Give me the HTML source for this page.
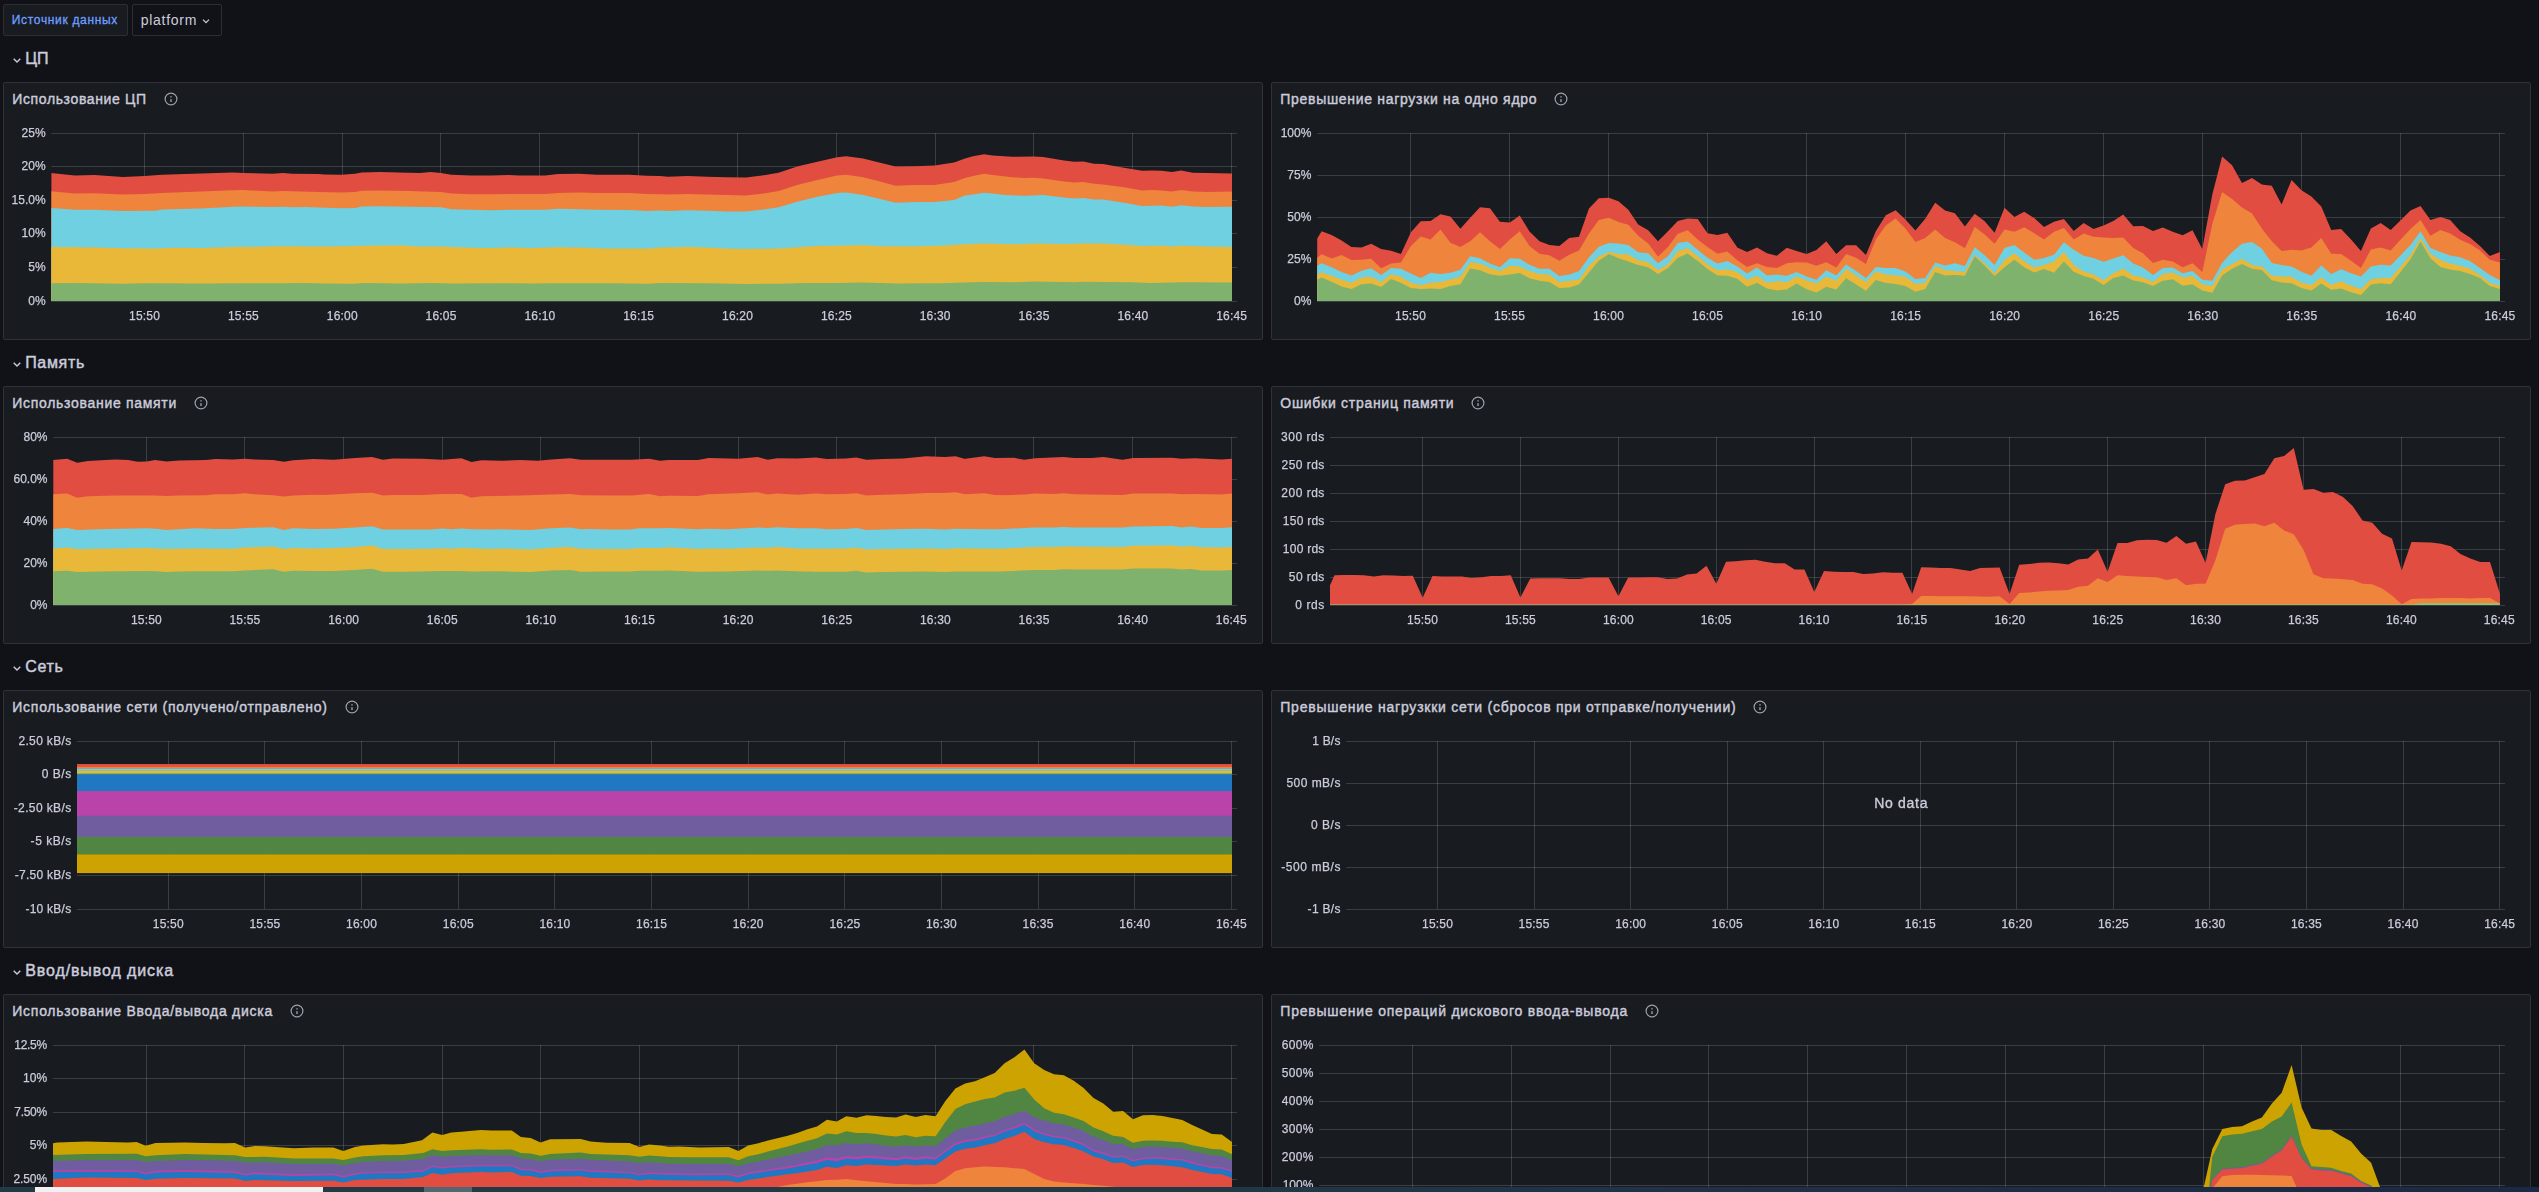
<!DOCTYPE html>
<html><head><meta charset="utf-8"><title>Dashboard</title>
<style>
html,body{margin:0;padding:0;background:#111217;width:2539px;height:1192px;overflow:hidden;}
body{width:2539px;height:1192px;overflow:hidden;position:relative;font-family:"Liberation Sans",sans-serif;color:rgb(204,204,220);}
.panel{position:absolute;width:1258px;height:256px;background:#181b1f;border:1px solid #303238;border-radius:2px;}
.pt{position:absolute;left:8.3px;top:7px;height:18px;line-height:18px;font-size:14px;white-space:nowrap;color:rgb(204,204,220);-webkit-text-stroke:0.4px rgb(204,204,220);}
.row{position:absolute;left:25.2px;height:30px;line-height:30px;font-size:16px;white-space:nowrap;color:rgb(204,204,220);-webkit-text-stroke:0.45px rgb(204,204,220);}
.chev{position:absolute;}
.var{position:absolute;top:4px;height:30px;border:1px solid #2c2e33;border-radius:2px;box-sizing:content-box;}
svg text{font-family:"Liberation Sans",sans-serif;}
#root{position:absolute;left:0;top:0;width:2539px;height:1192px;overflow:hidden;}
</style></head><body><div id="root">

<div class="var" style="left:3px;width:123px;background:#181b1f;"><span id="vl" style="letter-spacing:0.672px;position:absolute;left:7.8px;top:0;line-height:30px;font-size:12px;color:#6e9fff;white-space:nowrap;-webkit-text-stroke:0.3px #6e9fff;">Источник данных</span></div>
<div class="var" style="left:132px;width:88px;background:#111217;"><span id="vv" style="letter-spacing:0.703px;position:absolute;left:7.8px;top:0;line-height:30px;font-size:14px;color:rgb(204,204,220);white-space:nowrap;">platform</span><svg style="position:absolute;left:68px;top:12.5px" width="10" height="7" viewBox="0 0 10 7"><path d="M2.0,1.6 L5,4.6 L8.0,1.6" fill="none" stroke="rgb(204,204,220)" stroke-width="1.3"/></svg></div>
<svg class="chev" style="left:12px;top:56.6px" width="10" height="8" viewBox="0 0 10 8"><path d="M1.7,1.7 L5,5.0 L8.3,1.7" fill="none" stroke="rgb(204,204,220)" stroke-width="1.4"/></svg>
<div class="row" id="r0" style="letter-spacing:-0.072px;top:43.8px">ЦП</div>
<svg class="chev" style="left:12px;top:360.6px" width="10" height="8" viewBox="0 0 10 8"><path d="M1.7,1.7 L5,5.0 L8.3,1.7" fill="none" stroke="rgb(204,204,220)" stroke-width="1.4"/></svg>
<div class="row" id="r1" style="letter-spacing:0.678px;top:347.8px">Память</div>
<svg class="chev" style="left:12px;top:664.6px" width="10" height="8" viewBox="0 0 10 8"><path d="M1.7,1.7 L5,5.0 L8.3,1.7" fill="none" stroke="rgb(204,204,220)" stroke-width="1.4"/></svg>
<div class="row" id="r2" style="letter-spacing:0.727px;top:651.8px">Сеть</div>
<svg class="chev" style="left:12px;top:968.6px" width="10" height="8" viewBox="0 0 10 8"><path d="M1.7,1.7 L5,5.0 L8.3,1.7" fill="none" stroke="rgb(204,204,220)" stroke-width="1.4"/></svg>
<div class="row" id="r3" style="letter-spacing:0.894px;top:955.8px">Ввод/вывод диска</div>
<div class="panel" style="left:3px;top:82px"><div class="pt" id="t0" style="letter-spacing:0.621px;">Использование ЦП</div><svg style="position:absolute;left:158.6px;top:7.8px" width="16" height="16" viewBox="0 0 16 16"><circle cx="8" cy="8" r="5.9" fill="none" stroke="rgba(204,204,220,0.75)" stroke-width="1.2"/><rect x="7.3" y="8.2" width="1.4" height="2.8" fill="rgba(204,204,220,0.75)"/><rect x="7.3" y="5.2" width="1.4" height="1.3" fill="rgba(204,204,220,0.75)"/></svg></div>
<div class="panel" style="left:1271px;top:82px"><div class="pt" id="t1" style="letter-spacing:0.695px;">Превышение нагрузки на одно ядро</div><svg style="position:absolute;left:281.2px;top:7.8px" width="16" height="16" viewBox="0 0 16 16"><circle cx="8" cy="8" r="5.9" fill="none" stroke="rgba(204,204,220,0.75)" stroke-width="1.2"/><rect x="7.3" y="8.2" width="1.4" height="2.8" fill="rgba(204,204,220,0.75)"/><rect x="7.3" y="5.2" width="1.4" height="1.3" fill="rgba(204,204,220,0.75)"/></svg></div>
<div class="panel" style="left:3px;top:386px"><div class="pt" id="t2" style="letter-spacing:0.698px;">Использование памяти</div><svg style="position:absolute;left:189.0px;top:7.8px" width="16" height="16" viewBox="0 0 16 16"><circle cx="8" cy="8" r="5.9" fill="none" stroke="rgba(204,204,220,0.75)" stroke-width="1.2"/><rect x="7.3" y="8.2" width="1.4" height="2.8" fill="rgba(204,204,220,0.75)"/><rect x="7.3" y="5.2" width="1.4" height="1.3" fill="rgba(204,204,220,0.75)"/></svg></div>
<div class="panel" style="left:1271px;top:386px"><div class="pt" id="t3" style="letter-spacing:0.712px;">Ошибки страниц памяти</div><svg style="position:absolute;left:198.3px;top:7.8px" width="16" height="16" viewBox="0 0 16 16"><circle cx="8" cy="8" r="5.9" fill="none" stroke="rgba(204,204,220,0.75)" stroke-width="1.2"/><rect x="7.3" y="8.2" width="1.4" height="2.8" fill="rgba(204,204,220,0.75)"/><rect x="7.3" y="5.2" width="1.4" height="1.3" fill="rgba(204,204,220,0.75)"/></svg></div>
<div class="panel" style="left:3px;top:690px"><div class="pt" id="t4" style="letter-spacing:0.731px;">Использование сети (получено/отправлено)</div><svg style="position:absolute;left:339.6px;top:7.8px" width="16" height="16" viewBox="0 0 16 16"><circle cx="8" cy="8" r="5.9" fill="none" stroke="rgba(204,204,220,0.75)" stroke-width="1.2"/><rect x="7.3" y="8.2" width="1.4" height="2.8" fill="rgba(204,204,220,0.75)"/><rect x="7.3" y="5.2" width="1.4" height="1.3" fill="rgba(204,204,220,0.75)"/></svg></div>
<div class="panel" style="left:1271px;top:690px"><div class="pt" id="t5" style="letter-spacing:0.763px;">Превышение нагрузкки сети (сбросов при отправке/получении)</div><svg style="position:absolute;left:480.4px;top:7.8px" width="16" height="16" viewBox="0 0 16 16"><circle cx="8" cy="8" r="5.9" fill="none" stroke="rgba(204,204,220,0.75)" stroke-width="1.2"/><rect x="7.3" y="8.2" width="1.4" height="2.8" fill="rgba(204,204,220,0.75)"/><rect x="7.3" y="5.2" width="1.4" height="1.3" fill="rgba(204,204,220,0.75)"/></svg></div>
<div class="panel" style="left:3px;top:994px"><div class="pt" id="t6" style="letter-spacing:0.735px;">Использование Ввода/вывода диска</div><svg style="position:absolute;left:285.0px;top:7.8px" width="16" height="16" viewBox="0 0 16 16"><circle cx="8" cy="8" r="5.9" fill="none" stroke="rgba(204,204,220,0.75)" stroke-width="1.2"/><rect x="7.3" y="8.2" width="1.4" height="2.8" fill="rgba(204,204,220,0.75)"/><rect x="7.3" y="5.2" width="1.4" height="1.3" fill="rgba(204,204,220,0.75)"/></svg></div>
<div class="panel" style="left:1271px;top:994px"><div class="pt" id="t7" style="letter-spacing:0.772px;">Превышение операций дискового ввода-вывода</div><svg style="position:absolute;left:372.0px;top:7.8px" width="16" height="16" viewBox="0 0 16 16"><circle cx="8" cy="8" r="5.9" fill="none" stroke="rgba(204,204,220,0.75)" stroke-width="1.2"/><rect x="7.3" y="8.2" width="1.4" height="2.8" fill="rgba(204,204,220,0.75)"/><rect x="7.3" y="5.2" width="1.4" height="1.3" fill="rgba(204,204,220,0.75)"/></svg></div>
<svg style="position:absolute;left:0;top:0;pointer-events:none;will-change:transform" width="2539" height="1192" viewBox="0 0 2539 1192">
<g stroke="rgba(240,250,255,0.155)" stroke-width="1"><line x1="51.4" x2="1237.0" y1="133.5" y2="133.5"/><line x1="51.4" x2="1237.0" y1="166.5" y2="166.5"/><line x1="51.4" x2="1237.0" y1="200.5" y2="200.5"/><line x1="51.4" x2="1237.0" y1="233.5" y2="233.5"/><line x1="51.4" x2="1237.0" y1="267.5" y2="267.5"/><line x1="51.4" x2="1237.0" y1="301.5" y2="301.5"/><line x1="144.5" x2="144.5" y1="133.0" y2="301.0"/><line x1="243.5" x2="243.5" y1="133.0" y2="301.0"/><line x1="342.5" x2="342.5" y1="133.0" y2="301.0"/><line x1="440.5" x2="440.5" y1="133.0" y2="301.0"/><line x1="539.5" x2="539.5" y1="133.0" y2="301.0"/><line x1="638.5" x2="638.5" y1="133.0" y2="301.0"/><line x1="737.5" x2="737.5" y1="133.0" y2="301.0"/><line x1="836.5" x2="836.5" y1="133.0" y2="301.0"/><line x1="935.5" x2="935.5" y1="133.0" y2="301.0"/><line x1="1033.5" x2="1033.5" y1="133.0" y2="301.0"/><line x1="1132.5" x2="1132.5" y1="133.0" y2="301.0"/><line x1="1231.5" x2="1231.5" y1="133.0" y2="301.0"/></g><clipPath id="clip3_82"><rect x="51.4" y="122" width="1185.6" height="180.0"/></clipPath><g clip-path="url(#clip3_82)"><path d="M51.0,173.0 L74.9,175.4 L94.4,175.1 L123.0,176.9 L144.5,176.0 L162.0,174.7 L201.0,173.4 L233.6,172.5 L243.3,173.0 L272.6,173.7 L283.0,173.1 L292.1,173.8 L318.1,174.1 L324.6,174.4 L341.7,174.7 L355.0,173.7 L361.7,172.4 L379.9,172.1 L408.5,172.8 L420.2,173.1 L430.6,172.1 L441.0,173.1 L451.4,174.7 L470.9,175.4 L490.4,175.4 L508.6,175.0 L519.1,175.6 L545.1,175.6 L558.1,174.1 L578.9,173.8 L597.1,174.7 L629.6,174.7 L646.5,175.7 L660.0,176.0 L668.0,176.7 L687.5,176.0 L707.0,176.7 L726.5,177.3 L746.0,177.6 L765.5,175.0 L778.5,172.8 L798.0,166.3 L817.5,161.7 L837.1,157.2 L846.2,156.2 L863.1,158.5 L876.1,161.7 L895.6,166.5 L915.1,166.3 L934.6,165.6 L954.1,162.4 L965.0,158.5 L973.0,156.2 L984.1,154.3 L992.5,155.5 L1012.0,156.8 L1033.5,156.5 L1043.2,156.9 L1064.0,160.4 L1074.4,161.7 L1083.5,161.4 L1093.9,163.7 L1103.0,164.0 L1122.5,167.6 L1142.1,170.8 L1152.5,170.4 L1161.6,170.8 L1172.0,172.1 L1181.1,170.4 L1192.8,172.8 L1207.1,173.1 L1232.0,173.4 L1232.0,301.0 L51.0,301.0Z" fill="#E24D42" /><path d="M51.0,191.2 L74.9,193.6 L94.4,193.3 L123.0,194.5 L144.5,194.0 L162.0,192.9 L201.0,191.6 L233.6,190.3 L243.3,190.1 L272.6,191.4 L283.0,191.0 L318.1,191.9 L341.7,192.4 L355.0,191.9 L361.7,190.7 L379.9,190.6 L408.5,191.1 L441.0,191.9 L451.4,193.6 L470.9,194.2 L490.4,194.3 L508.6,194.0 L545.1,194.0 L558.1,192.9 L578.9,192.4 L597.1,192.9 L629.6,192.9 L646.5,194.0 L660.0,194.2 L668.0,194.5 L687.5,194.0 L707.0,194.6 L726.5,195.1 L746.0,195.5 L765.5,193.2 L778.5,191.0 L798.0,184.7 L817.5,179.9 L837.1,175.4 L846.2,174.7 L863.1,177.3 L876.1,180.6 L895.6,185.8 L915.1,185.1 L934.6,184.9 L954.1,181.9 L965.0,178.0 L973.0,176.0 L984.1,173.8 L992.5,175.1 L1012.0,177.3 L1025.0,178.0 L1033.5,177.7 L1043.2,178.6 L1064.0,181.6 L1074.4,182.5 L1083.5,182.0 L1093.9,183.8 L1103.0,184.5 L1122.5,187.1 L1142.1,190.6 L1152.5,190.1 L1161.6,190.6 L1172.0,191.4 L1181.1,190.1 L1192.8,191.4 L1207.1,191.9 L1232.0,191.6 L1232.0,301.0 L51.0,301.0Z" fill="#EF843C" /><path d="M51.0,208.1 L74.9,209.8 L94.4,209.8 L123.0,211.1 L155.5,210.7 L162.0,209.6 L201.0,208.5 L233.6,206.8 L243.3,206.6 L272.6,207.0 L283.0,206.7 L292.1,207.2 L305.1,207.0 L341.7,208.3 L355.0,207.9 L361.7,206.6 L379.9,206.2 L408.5,206.7 L441.0,207.2 L451.4,209.2 L470.9,209.8 L490.4,210.3 L508.6,209.8 L545.1,209.8 L558.1,208.8 L578.9,209.2 L597.1,209.8 L629.6,210.1 L646.5,210.9 L660.0,210.5 L668.0,210.9 L687.5,210.2 L707.0,210.7 L726.5,211.4 L746.0,211.6 L765.5,209.2 L778.5,207.2 L798.0,201.4 L817.5,196.8 L837.1,192.9 L846.2,192.4 L863.1,194.9 L876.1,198.1 L895.6,202.7 L915.1,202.0 L934.6,202.0 L954.1,200.1 L965.0,195.5 L973.0,194.6 L984.1,192.7 L992.5,193.6 L1004.2,195.1 L1025.0,195.8 L1043.2,194.9 L1064.0,197.5 L1074.4,198.4 L1083.5,197.9 L1093.9,199.4 L1103.0,199.4 L1122.5,202.4 L1142.1,205.9 L1161.6,205.5 L1172.0,206.8 L1181.1,205.3 L1192.8,206.6 L1207.1,207.0 L1232.0,206.8 L1232.0,301.0 L51.0,301.0Z" fill="#6ED0E0" /><path d="M51.0,246.9 L74.9,247.3 L94.4,247.5 L123.0,248.2 L155.5,248.4 L175.0,247.8 L201.0,247.9 L233.6,247.1 L283.0,246.2 L324.6,246.5 L355.0,246.0 L379.9,245.4 L402.0,245.6 L420.2,246.4 L441.0,246.6 L470.9,247.8 L490.4,247.9 L508.6,247.5 L532.1,247.9 L558.1,247.3 L588.0,247.8 L603.6,248.4 L629.6,248.4 L649.1,248.4 L660.0,247.5 L687.5,247.1 L707.0,247.5 L726.5,248.6 L746.0,249.1 L778.5,248.6 L798.0,247.3 L817.5,246.0 L837.1,245.8 L863.1,245.3 L882.6,246.2 L915.1,246.2 L941.1,245.8 L965.0,244.3 L984.1,243.4 L1014.6,244.3 L1033.5,243.4 L1064.0,244.0 L1083.5,243.6 L1103.0,243.4 L1129.1,244.9 L1142.1,246.0 L1161.6,245.8 L1172.0,246.5 L1181.1,245.8 L1207.1,246.6 L1232.0,246.9 L1232.0,301.0 L51.0,301.0Z" fill="#EAB839" /><path d="M51.0,283.3 L74.9,283.0 L123.0,283.7 L144.5,283.3 L201.0,283.4 L243.3,283.3 L283.0,283.3 L305.1,283.0 L324.6,283.4 L355.0,283.7 L363.0,283.0 L402.0,283.4 L430.6,283.0 L451.4,283.4 L508.6,283.3 L532.1,283.4 L558.1,283.3 L610.1,283.3 L649.1,283.7 L660.0,283.0 L707.0,283.3 L746.0,283.9 L778.5,283.7 L804.5,282.9 L837.1,282.9 L863.1,282.6 L895.6,283.6 L941.1,283.3 L965.0,282.4 L984.1,282.1 L1014.6,282.2 L1033.5,281.6 L1064.0,282.0 L1074.4,282.2 L1083.5,281.7 L1129.1,282.2 L1152.5,282.9 L1181.1,282.2 L1232.0,282.4 L1232.0,301.0 L51.0,301.0Z" fill="#7EB26D" /></g><g fill="rgb(204,204,220)" stroke="rgb(204,204,220)" stroke-width="0.25" font-size="12px" class="tk"><text x="45.6" y="136.8" text-anchor="end">25%</text><text x="45.6" y="169.8" text-anchor="end">20%</text><text x="45.6" y="203.8" text-anchor="end">15.0%</text><text x="45.6" y="236.8" text-anchor="end">10%</text><text x="45.6" y="270.8" text-anchor="end">5%</text><text x="45.6" y="304.8" text-anchor="end">0%</text><text x="144.5" y="320.0" text-anchor="middle" textLength="30.8" lengthAdjust="spacing">15:50</text><text x="243.3" y="320.0" text-anchor="middle" textLength="30.8" lengthAdjust="spacing">15:55</text><text x="342.2" y="320.0" text-anchor="middle" textLength="30.8" lengthAdjust="spacing">16:00</text><text x="441.0" y="320.0" text-anchor="middle" textLength="30.8" lengthAdjust="spacing">16:05</text><text x="539.8" y="320.0" text-anchor="middle" textLength="30.8" lengthAdjust="spacing">16:10</text><text x="638.6" y="320.0" text-anchor="middle" textLength="30.8" lengthAdjust="spacing">16:15</text><text x="737.5" y="320.0" text-anchor="middle" textLength="30.8" lengthAdjust="spacing">16:20</text><text x="836.3" y="320.0" text-anchor="middle" textLength="30.8" lengthAdjust="spacing">16:25</text><text x="935.1" y="320.0" text-anchor="middle" textLength="30.8" lengthAdjust="spacing">16:30</text><text x="1034.0" y="320.0" text-anchor="middle" textLength="30.8" lengthAdjust="spacing">16:35</text><text x="1132.8" y="320.0" text-anchor="middle" textLength="30.8" lengthAdjust="spacing">16:40</text><text x="1231.6" y="320.0" text-anchor="middle" textLength="30.8" lengthAdjust="spacing">16:45</text></g>
<g stroke="rgba(240,250,255,0.155)" stroke-width="1"><line x1="1317.2" x2="2505.0" y1="133.5" y2="133.5"/><line x1="1317.2" x2="2505.0" y1="175.5" y2="175.5"/><line x1="1317.2" x2="2505.0" y1="217.5" y2="217.5"/><line x1="1317.2" x2="2505.0" y1="259.5" y2="259.5"/><line x1="1317.2" x2="2505.0" y1="301.5" y2="301.5"/><line x1="1410.5" x2="1410.5" y1="133.0" y2="301.0"/><line x1="1509.5" x2="1509.5" y1="133.0" y2="301.0"/><line x1="1608.5" x2="1608.5" y1="133.0" y2="301.0"/><line x1="1707.5" x2="1707.5" y1="133.0" y2="301.0"/><line x1="1806.5" x2="1806.5" y1="133.0" y2="301.0"/><line x1="1905.5" x2="1905.5" y1="133.0" y2="301.0"/><line x1="2004.5" x2="2004.5" y1="133.0" y2="301.0"/><line x1="2103.5" x2="2103.5" y1="133.0" y2="301.0"/><line x1="2202.5" x2="2202.5" y1="133.0" y2="301.0"/><line x1="2301.5" x2="2301.5" y1="133.0" y2="301.0"/><line x1="2400.5" x2="2400.5" y1="133.0" y2="301.0"/><line x1="2499.5" x2="2499.5" y1="133.0" y2="301.0"/></g><clipPath id="clip1271_82"><rect x="1317.2" y="122" width="1187.8" height="180.0"/></clipPath><g clip-path="url(#clip1271_82)"><path d="M1317.0,238.7 L1321.7,231.3 L1331.6,235.0 L1341.6,240.4 L1351.4,247.0 L1361.4,247.5 L1371.2,243.7 L1381.1,248.9 L1391.1,250.7 L1400.9,254.1 L1410.9,232.3 L1420.7,221.3 L1430.6,221.0 L1440.5,214.3 L1450.4,216.6 L1460.4,228.7 L1470.2,217.7 L1480.0,207.2 L1490.0,208.3 L1499.9,221.8 L1509.9,222.5 L1519.7,215.5 L1529.5,231.6 L1539.5,241.2 L1549.4,245.0 L1559.3,246.0 L1569.2,237.9 L1579.0,236.8 L1589.0,208.6 L1598.8,198.3 L1608.8,197.8 L1618.5,201.2 L1628.3,209.7 L1638.2,224.4 L1648.2,230.3 L1658.0,241.2 L1668.0,231.3 L1677.8,221.0 L1687.7,218.4 L1697.7,219.1 L1707.5,233.2 L1717.5,235.0 L1727.3,232.8 L1737.3,247.5 L1747.1,251.9 L1757.0,247.5 L1767.0,253.3 L1776.8,255.8 L1786.8,247.8 L1796.6,251.1 L1806.6,254.1 L1816.4,250.0 L1826.3,241.2 L1836.3,254.1 L1846.1,245.3 L1856.1,245.3 L1865.9,255.1 L1875.8,231.3 L1885.8,215.2 L1895.6,210.3 L1905.4,219.6 L1915.4,230.6 L1925.2,218.8 L1935.2,202.7 L1945.1,210.5 L1954.9,213.3 L1964.9,226.5 L1974.7,213.7 L1984.7,221.3 L1994.6,232.8 L2004.5,207.8 L2014.4,216.9 L2024.2,211.8 L2034.2,218.1 L2044.0,226.9 L2054.0,221.8 L2063.9,219.1 L2073.7,230.9 L2083.7,223.0 L2093.5,229.1 L2103.5,225.4 L2113.3,221.0 L2123.2,214.4 L2133.2,226.2 L2143.0,225.9 L2153.0,230.9 L2162.8,227.4 L2172.7,231.8 L2182.7,235.3 L2192.5,230.3 L2202.3,248.9 L2212.3,194.6 L2222.1,156.4 L2232.1,165.2 L2242.0,182.9 L2252.0,178.0 L2261.8,184.6 L2271.8,185.8 L2281.6,204.4 L2291.6,179.9 L2301.4,190.2 L2311.4,196.4 L2321.3,206.4 L2331.2,229.9 L2341.1,229.1 L2351.1,239.4 L2360.9,251.1 L2370.9,228.4 L2380.7,223.0 L2390.7,229.9 L2400.7,220.3 L2410.5,210.5 L2420.5,206.1 L2430.4,220.0 L2440.4,217.1 L2450.2,220.0 L2460.2,231.3 L2470.0,237.6 L2480.0,246.0 L2489.8,256.0 L2500.0,251.9 L2500.0,301.0 L1317.0,301.0Z" fill="#E24D42" /><path d="M1317.0,257.8 L1321.7,254.2 L1331.6,258.5 L1341.6,255.1 L1351.4,260.1 L1361.4,259.7 L1371.2,258.8 L1381.1,268.2 L1391.1,263.6 L1400.9,262.6 L1410.9,246.0 L1420.7,236.6 L1430.6,239.4 L1440.5,229.6 L1450.4,242.8 L1460.4,246.9 L1470.2,241.2 L1480.0,232.3 L1490.0,241.2 L1499.9,248.9 L1509.9,239.4 L1519.7,231.3 L1529.5,246.0 L1539.5,253.8 L1549.4,255.3 L1559.3,260.7 L1569.2,254.8 L1579.0,250.4 L1589.0,233.5 L1598.8,219.9 L1608.8,217.8 L1618.5,222.1 L1628.3,224.7 L1638.2,235.7 L1648.2,243.5 L1658.0,256.6 L1668.0,247.0 L1677.8,233.8 L1687.7,230.3 L1697.7,239.4 L1707.5,247.0 L1717.5,253.8 L1727.3,251.6 L1737.3,260.2 L1747.1,267.0 L1757.0,263.2 L1767.0,267.0 L1776.8,268.0 L1786.8,263.2 L1796.6,262.2 L1806.6,262.5 L1816.4,265.8 L1826.3,262.2 L1836.3,267.6 L1846.1,254.1 L1856.1,257.8 L1865.9,263.9 L1875.8,239.4 L1885.8,225.4 L1895.6,218.5 L1905.4,228.4 L1915.4,241.9 L1925.2,237.9 L1935.2,229.4 L1945.1,237.9 L1954.9,242.3 L1964.9,248.2 L1974.7,226.9 L1984.7,234.6 L1994.6,243.8 L2004.5,229.6 L2014.4,231.8 L2024.2,227.2 L2034.2,233.2 L2044.0,239.4 L2054.0,231.8 L2063.9,227.9 L2073.7,239.4 L2083.7,233.5 L2093.5,236.8 L2103.5,237.5 L2113.3,237.9 L2123.2,237.6 L2133.2,247.9 L2143.0,253.3 L2153.0,262.9 L2162.8,259.7 L2172.7,261.4 L2182.7,267.3 L2192.5,263.2 L2202.3,272.1 L2212.3,224.0 L2222.1,192.1 L2232.1,199.0 L2242.0,207.5 L2252.0,213.4 L2261.8,228.4 L2271.8,241.2 L2281.6,251.1 L2291.6,249.7 L2301.4,250.4 L2311.4,247.5 L2321.3,237.9 L2331.2,253.8 L2341.1,254.1 L2351.1,260.7 L2360.9,268.0 L2370.9,249.4 L2380.7,247.5 L2390.7,250.4 L2400.7,239.4 L2410.5,229.1 L2420.5,220.0 L2430.4,235.7 L2440.4,229.9 L2450.2,233.5 L2460.2,239.7 L2470.0,244.1 L2480.0,250.4 L2489.8,259.7 L2500.0,262.6 L2500.0,301.0 L1317.0,301.0Z" fill="#EF843C" /><path d="M1317.0,265.8 L1321.7,263.2 L1331.6,267.3 L1341.6,272.1 L1351.4,275.4 L1361.4,270.7 L1371.2,268.3 L1381.1,275.1 L1391.1,268.0 L1400.9,268.8 L1410.9,273.6 L1420.7,278.0 L1430.6,272.7 L1440.5,273.9 L1450.4,272.7 L1460.4,269.8 L1470.2,256.3 L1480.0,258.2 L1490.0,263.6 L1499.9,267.3 L1509.9,258.2 L1519.7,258.8 L1529.5,264.7 L1539.5,268.8 L1549.4,268.8 L1559.3,276.1 L1569.2,274.6 L1579.0,271.0 L1589.0,257.3 L1598.8,246.7 L1608.8,243.1 L1618.5,243.4 L1628.3,245.0 L1638.2,252.2 L1648.2,253.3 L1658.0,263.2 L1668.0,256.3 L1677.8,243.1 L1687.7,241.6 L1697.7,249.7 L1707.5,257.8 L1717.5,263.6 L1727.3,261.1 L1737.3,266.6 L1747.1,273.6 L1757.0,267.6 L1767.0,275.4 L1776.8,274.6 L1786.8,275.8 L1796.6,272.0 L1806.6,276.4 L1816.4,279.8 L1826.3,270.2 L1836.3,275.4 L1846.1,264.4 L1856.1,271.0 L1865.9,277.9 L1875.8,267.0 L1885.8,268.0 L1895.6,268.0 L1905.4,271.4 L1915.4,279.0 L1925.2,277.9 L1935.2,262.6 L1945.1,265.5 L1954.9,263.3 L1964.9,266.1 L1974.7,247.2 L1984.7,255.3 L1994.6,265.1 L2004.5,247.9 L2014.4,245.0 L2024.2,252.6 L2034.2,259.7 L2044.0,258.0 L2054.0,254.8 L2063.9,242.3 L2073.7,249.7 L2083.7,255.8 L2093.5,258.0 L2103.5,261.7 L2113.3,258.5 L2123.2,255.3 L2133.2,263.6 L2143.0,267.6 L2153.0,275.1 L2162.8,268.0 L2172.7,267.6 L2182.7,273.2 L2192.5,271.0 L2202.3,279.8 L2212.3,280.8 L2222.1,262.9 L2232.1,251.9 L2242.0,243.8 L2252.0,241.9 L2261.8,248.6 L2271.8,262.9 L2281.6,265.1 L2291.6,266.6 L2301.4,271.7 L2311.4,275.8 L2321.3,265.5 L2331.2,273.9 L2341.1,269.2 L2351.1,273.2 L2360.9,276.4 L2370.9,266.6 L2380.7,264.8 L2390.7,265.5 L2400.7,255.3 L2410.5,245.0 L2420.5,231.3 L2430.4,247.9 L2440.4,251.9 L2450.2,255.6 L2460.2,257.3 L2470.0,261.1 L2480.0,268.0 L2489.8,274.9 L2500.0,280.2 L2500.0,301.0 L1317.0,301.0Z" fill="#6ED0E0" /><path d="M1317.0,274.6 L1321.7,272.4 L1331.6,275.7 L1341.6,279.8 L1351.4,282.7 L1361.4,277.6 L1371.2,276.8 L1381.1,282.0 L1391.1,274.2 L1400.9,276.8 L1410.9,282.7 L1420.7,285.2 L1430.6,282.7 L1440.5,282.0 L1450.4,279.5 L1460.4,276.8 L1470.2,262.2 L1480.0,263.6 L1490.0,268.0 L1499.9,271.0 L1509.9,265.8 L1519.7,266.6 L1529.5,271.0 L1539.5,273.9 L1549.4,274.6 L1559.3,282.0 L1569.2,280.8 L1579.0,279.8 L1589.0,265.8 L1598.8,256.6 L1608.8,251.9 L1618.5,254.1 L1628.3,254.5 L1638.2,260.2 L1648.2,262.2 L1658.0,269.9 L1668.0,264.4 L1677.8,251.1 L1687.7,248.2 L1697.7,256.3 L1707.5,264.4 L1717.5,270.2 L1727.3,269.5 L1737.3,272.1 L1747.1,280.1 L1757.0,275.8 L1767.0,282.7 L1776.8,281.2 L1786.8,282.3 L1796.6,276.4 L1806.6,280.5 L1816.4,283.5 L1826.3,276.8 L1836.3,280.8 L1846.1,268.8 L1856.1,275.4 L1865.9,282.0 L1875.8,271.3 L1885.8,274.6 L1895.6,275.4 L1905.4,276.8 L1915.4,283.9 L1925.2,282.7 L1935.2,266.1 L1945.1,270.2 L1954.9,271.0 L1964.9,272.1 L1974.7,254.8 L1984.7,263.6 L1994.6,273.2 L2004.5,260.0 L2014.4,253.3 L2024.2,261.4 L2034.2,267.6 L2044.0,265.1 L2054.0,261.4 L2063.9,251.9 L2073.7,265.1 L2083.7,271.4 L2093.5,274.6 L2103.5,280.2 L2113.3,273.2 L2123.2,268.5 L2133.2,275.4 L2143.0,277.6 L2153.0,282.0 L2162.8,273.9 L2172.7,272.4 L2182.7,277.3 L2192.5,276.1 L2202.3,284.2 L2212.3,285.9 L2222.1,269.5 L2232.1,264.1 L2242.0,258.8 L2252.0,265.1 L2261.8,266.6 L2271.8,275.7 L2281.6,276.4 L2291.6,276.8 L2301.4,282.7 L2311.4,284.9 L2321.3,277.3 L2331.2,284.9 L2341.1,281.2 L2351.1,285.7 L2360.9,289.0 L2370.9,279.3 L2380.7,277.9 L2390.7,277.9 L2400.7,266.6 L2410.5,254.8 L2420.5,237.9 L2430.4,253.8 L2440.4,260.0 L2450.2,263.6 L2460.2,265.8 L2470.0,268.8 L2480.0,274.9 L2489.8,282.7 L2500.0,285.9 L2500.0,301.0 L1317.0,301.0Z" fill="#EAB839" /><path d="M1317.0,279.8 L1321.7,277.6 L1331.6,281.7 L1341.6,286.4 L1351.4,289.0 L1361.4,284.2 L1371.2,283.5 L1381.1,287.1 L1391.1,279.0 L1400.9,282.7 L1410.9,287.9 L1420.7,289.0 L1430.6,288.6 L1440.5,289.0 L1450.4,285.9 L1460.4,284.2 L1470.2,268.5 L1480.0,270.2 L1490.0,274.3 L1499.9,275.8 L1509.9,274.6 L1519.7,272.9 L1529.5,278.3 L1539.5,280.8 L1549.4,282.0 L1559.3,288.1 L1569.2,287.6 L1579.0,284.6 L1589.0,272.4 L1598.8,260.7 L1608.8,254.1 L1618.5,258.2 L1628.3,261.4 L1638.2,265.1 L1648.2,267.3 L1658.0,273.9 L1668.0,268.0 L1677.8,257.8 L1687.7,253.6 L1697.7,261.1 L1707.5,269.1 L1717.5,275.4 L1727.3,275.8 L1737.3,278.8 L1747.1,286.8 L1757.0,282.7 L1767.0,288.6 L1776.8,290.4 L1786.8,289.6 L1796.6,283.5 L1806.6,289.3 L1816.4,292.6 L1826.3,286.7 L1836.3,289.6 L1846.1,278.3 L1856.1,284.6 L1865.9,290.8 L1875.8,280.1 L1885.8,283.0 L1895.6,283.9 L1905.4,286.1 L1915.4,291.8 L1925.2,288.9 L1935.2,272.1 L1945.1,275.4 L1954.9,275.1 L1964.9,275.7 L1974.7,256.3 L1984.7,265.8 L1994.6,276.1 L2004.5,267.3 L2014.4,259.7 L2024.2,267.3 L2034.2,272.4 L2044.0,269.1 L2054.0,272.7 L2063.9,261.4 L2073.7,271.7 L2083.7,276.1 L2093.5,278.8 L2103.5,284.9 L2113.3,277.9 L2123.2,275.4 L2133.2,280.5 L2143.0,282.3 L2153.0,286.1 L2162.8,280.8 L2172.7,279.3 L2182.7,285.7 L2192.5,284.2 L2202.3,290.5 L2212.3,292.7 L2222.1,275.4 L2232.1,268.8 L2242.0,264.1 L2252.0,268.8 L2261.8,269.9 L2271.8,280.2 L2281.6,282.4 L2291.6,283.2 L2301.4,287.9 L2311.4,290.4 L2321.3,283.5 L2331.2,289.8 L2341.1,288.6 L2351.1,292.3 L2360.9,294.9 L2370.9,284.6 L2380.7,283.2 L2390.7,284.2 L2400.7,271.7 L2410.5,259.2 L2420.5,241.6 L2430.4,258.2 L2440.4,267.0 L2450.2,269.5 L2460.2,271.0 L2470.0,273.9 L2480.0,277.9 L2489.8,286.1 L2500.0,289.0 L2500.0,301.0 L1317.0,301.0Z" fill="#7EB26D" /></g><g fill="rgb(204,204,220)" stroke="rgb(204,204,220)" stroke-width="0.25" font-size="12px" class="tk"><text x="1311.4" y="136.8" text-anchor="end">100%</text><text x="1311.4" y="178.8" text-anchor="end">75%</text><text x="1311.4" y="220.8" text-anchor="end">50%</text><text x="1311.4" y="262.8" text-anchor="end">25%</text><text x="1311.4" y="304.8" text-anchor="end">0%</text><text x="1410.5" y="320.0" text-anchor="middle" textLength="30.8" lengthAdjust="spacing">15:50</text><text x="1509.5" y="320.0" text-anchor="middle" textLength="30.8" lengthAdjust="spacing">15:55</text><text x="1608.5" y="320.0" text-anchor="middle" textLength="30.8" lengthAdjust="spacing">16:00</text><text x="1707.5" y="320.0" text-anchor="middle" textLength="30.8" lengthAdjust="spacing">16:05</text><text x="1806.6" y="320.0" text-anchor="middle" textLength="30.8" lengthAdjust="spacing">16:10</text><text x="1905.6" y="320.0" text-anchor="middle" textLength="30.8" lengthAdjust="spacing">16:15</text><text x="2004.6" y="320.0" text-anchor="middle" textLength="30.8" lengthAdjust="spacing">16:20</text><text x="2103.7" y="320.0" text-anchor="middle" textLength="30.8" lengthAdjust="spacing">16:25</text><text x="2202.7" y="320.0" text-anchor="middle" textLength="30.8" lengthAdjust="spacing">16:30</text><text x="2301.7" y="320.0" text-anchor="middle" textLength="30.8" lengthAdjust="spacing">16:35</text><text x="2400.8" y="320.0" text-anchor="middle" textLength="30.8" lengthAdjust="spacing">16:40</text><text x="2499.8" y="320.0" text-anchor="middle" textLength="30.8" lengthAdjust="spacing">16:45</text></g>
<g stroke="rgba(240,250,255,0.155)" stroke-width="1"><line x1="53.3" x2="1237.0" y1="437.5" y2="437.5"/><line x1="53.3" x2="1237.0" y1="479.5" y2="479.5"/><line x1="53.3" x2="1237.0" y1="521.5" y2="521.5"/><line x1="53.3" x2="1237.0" y1="563.5" y2="563.5"/><line x1="53.3" x2="1237.0" y1="605.5" y2="605.5"/><line x1="146.5" x2="146.5" y1="437.0" y2="605.0"/><line x1="244.5" x2="244.5" y1="437.0" y2="605.0"/><line x1="343.5" x2="343.5" y1="437.0" y2="605.0"/><line x1="442.5" x2="442.5" y1="437.0" y2="605.0"/><line x1="540.5" x2="540.5" y1="437.0" y2="605.0"/><line x1="639.5" x2="639.5" y1="437.0" y2="605.0"/><line x1="738.5" x2="738.5" y1="437.0" y2="605.0"/><line x1="836.5" x2="836.5" y1="437.0" y2="605.0"/><line x1="935.5" x2="935.5" y1="437.0" y2="605.0"/><line x1="1033.5" x2="1033.5" y1="437.0" y2="605.0"/><line x1="1132.5" x2="1132.5" y1="437.0" y2="605.0"/><line x1="1231.5" x2="1231.5" y1="437.0" y2="605.0"/></g><clipPath id="clip3_386"><rect x="53.3" y="426" width="1183.7" height="180.0"/></clipPath><g clip-path="url(#clip3_386)"><path d="M53.0,460.1 L67.1,458.7 L77.2,462.8 L88.0,461.1 L105.4,460.1 L116.1,459.4 L128.2,460.1 L137.6,461.7 L146.6,461.4 L155.1,460.1 L166.5,461.4 L179.2,460.5 L206.1,460.1 L215.5,459.0 L232.9,459.4 L245.0,458.7 L254.4,459.4 L273.2,460.1 L283.9,461.7 L293.3,460.3 L313.5,459.0 L333.6,459.8 L355.1,458.1 L372.1,457.0 L382.9,459.7 L393.0,458.5 L422.5,458.7 L442.6,459.7 L461.4,458.3 L471.5,462.1 L481.5,460.3 L501.7,460.7 L520.5,460.1 L537.9,460.7 L551.3,459.4 L570.1,458.3 L580.9,459.8 L609.1,459.7 L631.9,459.8 L649.3,458.7 L660.1,460.7 L668.4,460.1 L698.0,460.1 L708.7,458.1 L738.2,458.7 L757.7,457.0 L767.8,459.7 L777.1,458.3 L797.3,458.5 L816.1,457.4 L826.8,459.0 L845.6,458.5 L856.3,457.4 L866.4,459.8 L883.2,459.0 L903.3,458.5 L926.1,456.3 L944.9,457.1 L955.7,456.3 L965.1,459.1 L965.4,458.7 L984.2,456.3 L994.9,458.1 L1013.7,457.8 L1024.4,459.8 L1035.2,458.3 L1063.4,457.1 L1074.1,458.1 L1091.5,458.1 L1103.6,457.0 L1122.4,459.7 L1133.2,458.1 L1172.1,457.7 L1181.5,458.7 L1194.9,458.3 L1221.7,459.4 L1232.0,458.7 L1232.0,605.0 L53.0,605.0Z" fill="#E24D42" /><path d="M53.0,494.3 L67.1,493.6 L77.2,497.7 L88.0,496.3 L116.1,495.4 L155.1,495.4 L166.5,496.0 L179.2,495.4 L206.1,495.2 L215.5,494.3 L232.9,494.3 L245.0,493.2 L254.4,494.3 L273.2,495.2 L283.9,496.6 L293.3,495.6 L313.5,494.7 L324.2,495.0 L355.1,493.2 L372.1,492.7 L382.9,495.6 L393.0,495.0 L422.5,495.0 L442.6,494.0 L461.4,494.0 L471.5,497.7 L481.5,496.3 L520.5,495.6 L551.3,494.6 L570.1,494.0 L580.9,495.2 L609.1,495.6 L631.9,495.4 L649.3,494.0 L660.1,496.3 L668.4,495.8 L698.0,496.0 L708.7,494.3 L738.2,493.2 L757.7,492.3 L767.8,494.6 L777.1,493.6 L797.3,494.7 L816.1,493.6 L826.8,494.3 L845.6,493.9 L856.3,493.2 L866.4,495.6 L883.2,494.7 L903.3,494.3 L926.1,493.0 L944.9,493.0 L955.7,492.3 L965.1,494.3 L965.4,494.3 L984.2,493.2 L994.9,495.0 L1004.3,495.2 L1024.4,494.6 L1035.2,493.4 L1054.0,493.9 L1063.4,493.2 L1074.1,494.3 L1122.4,495.0 L1133.2,493.4 L1172.1,493.6 L1181.5,494.3 L1194.9,494.0 L1221.7,494.6 L1232.0,493.4 L1232.0,605.0 L53.0,605.0Z" fill="#EF843C" /><path d="M53.0,528.9 L67.1,528.1 L77.2,529.9 L98.7,529.2 L146.6,528.3 L156.4,528.8 L165.8,529.9 L179.2,529.2 L195.3,528.3 L215.5,528.9 L232.9,528.9 L245.0,527.9 L273.2,527.2 L283.9,529.9 L293.3,528.3 L313.5,528.9 L333.6,528.8 L355.1,527.4 L372.1,526.2 L382.9,529.6 L403.7,529.5 L430.5,529.5 L442.6,528.5 L452.0,529.2 L461.4,528.5 L471.5,529.2 L490.9,529.6 L501.7,529.2 L529.9,530.1 L551.3,528.3 L570.1,527.6 L580.9,529.2 L590.3,528.9 L609.1,529.5 L629.2,529.5 L639.9,528.3 L660.1,528.3 L668.4,527.9 L698.0,529.2 L708.7,528.8 L727.5,529.2 L758.4,527.6 L767.8,527.9 L777.1,527.2 L797.3,528.3 L816.1,528.3 L826.8,529.2 L845.6,528.9 L856.3,528.1 L866.4,529.9 L883.2,529.5 L903.3,528.9 L926.1,528.8 L944.9,529.5 L955.7,528.8 L965.1,528.9 L965.4,528.9 L1000.3,529.2 L1033.8,527.6 L1054.0,527.6 L1063.4,526.9 L1074.1,527.4 L1122.4,527.4 L1133.2,526.5 L1172.1,526.1 L1181.5,527.4 L1190.9,526.5 L1201.6,527.9 L1221.7,527.9 L1232.0,527.2 L1232.0,605.0 L53.0,605.0Z" fill="#6ED0E0" /><path d="M53.0,548.4 L67.1,547.6 L77.2,549.3 L98.7,548.7 L146.6,548.1 L156.4,548.4 L165.8,549.1 L179.2,548.7 L195.3,548.4 L232.9,548.7 L245.0,547.6 L273.2,546.6 L283.9,549.1 L293.3,548.0 L313.5,548.4 L333.6,548.0 L355.1,546.9 L372.1,545.6 L382.9,548.9 L403.7,548.9 L430.5,548.7 L442.6,548.3 L452.0,548.7 L461.4,548.0 L490.9,548.9 L501.7,548.4 L529.9,549.6 L551.3,547.7 L570.1,547.0 L580.9,548.7 L609.1,549.1 L629.2,548.9 L639.9,548.0 L660.1,548.0 L668.4,547.3 L698.0,548.9 L708.7,548.4 L727.5,548.7 L758.4,547.6 L767.8,547.7 L777.1,547.0 L797.3,548.4 L816.1,548.7 L845.6,548.4 L856.3,547.7 L866.4,549.6 L883.2,549.1 L903.3,548.7 L926.1,548.4 L944.9,549.1 L955.7,548.3 L965.1,548.4 L965.4,548.4 L1000.3,548.7 L1033.8,547.0 L1054.0,547.0 L1063.4,546.4 L1074.1,546.6 L1122.4,546.9 L1133.2,545.7 L1172.1,545.6 L1181.5,546.6 L1190.9,546.0 L1201.6,547.3 L1221.7,547.6 L1232.0,546.9 L1232.0,605.0 L53.0,605.0Z" fill="#EAB839" /><path d="M53.0,571.2 L67.1,570.7 L77.2,571.9 L98.7,571.5 L146.6,571.1 L156.4,571.3 L165.8,571.9 L179.2,571.5 L195.3,571.2 L232.9,571.2 L245.0,570.4 L273.2,569.2 L283.9,571.7 L293.3,570.8 L313.5,571.1 L333.6,571.1 L355.1,570.1 L372.1,568.8 L382.9,571.7 L403.7,571.7 L442.6,571.1 L461.4,571.1 L471.5,571.5 L501.7,571.2 L529.9,572.1 L551.3,570.4 L570.1,570.1 L580.9,571.7 L609.1,571.5 L629.2,571.5 L639.9,570.8 L660.1,570.8 L668.4,570.4 L698.0,571.7 L727.5,571.5 L758.4,570.4 L767.8,570.8 L777.1,570.4 L797.3,571.2 L816.1,571.7 L845.6,571.7 L856.3,570.8 L866.4,572.6 L883.2,572.1 L903.3,571.7 L926.1,571.5 L944.9,572.1 L955.7,571.5 L965.1,571.5 L965.4,571.5 L1000.3,571.5 L1033.8,570.1 L1054.0,569.9 L1063.4,569.2 L1074.1,569.5 L1122.4,569.5 L1133.2,568.5 L1172.1,568.5 L1181.5,569.5 L1190.9,569.1 L1201.6,570.4 L1221.7,570.5 L1232.0,569.9 L1232.0,605.0 L53.0,605.0Z" fill="#7EB26D" /></g><g fill="rgb(204,204,220)" stroke="rgb(204,204,220)" stroke-width="0.25" font-size="12px" class="tk"><text x="47.5" y="440.8" text-anchor="end">80%</text><text x="47.5" y="482.8" text-anchor="end">60.0%</text><text x="47.5" y="524.8" text-anchor="end">40%</text><text x="47.5" y="566.8" text-anchor="end">20%</text><text x="47.5" y="608.8" text-anchor="end">0%</text><text x="146.3" y="624.0" text-anchor="middle" textLength="30.8" lengthAdjust="spacing">15:50</text><text x="244.9" y="624.0" text-anchor="middle" textLength="30.8" lengthAdjust="spacing">15:55</text><text x="343.6" y="624.0" text-anchor="middle" textLength="30.8" lengthAdjust="spacing">16:00</text><text x="442.2" y="624.0" text-anchor="middle" textLength="30.8" lengthAdjust="spacing">16:05</text><text x="540.8" y="624.0" text-anchor="middle" textLength="30.8" lengthAdjust="spacing">16:10</text><text x="639.5" y="624.0" text-anchor="middle" textLength="30.8" lengthAdjust="spacing">16:15</text><text x="738.1" y="624.0" text-anchor="middle" textLength="30.8" lengthAdjust="spacing">16:20</text><text x="836.7" y="624.0" text-anchor="middle" textLength="30.8" lengthAdjust="spacing">16:25</text><text x="935.3" y="624.0" text-anchor="middle" textLength="30.8" lengthAdjust="spacing">16:30</text><text x="1034.0" y="624.0" text-anchor="middle" textLength="30.8" lengthAdjust="spacing">16:35</text><text x="1132.6" y="624.0" text-anchor="middle" textLength="30.8" lengthAdjust="spacing">16:40</text><text x="1231.2" y="624.0" text-anchor="middle" textLength="30.8" lengthAdjust="spacing">16:45</text></g>
<g stroke="rgba(240,250,255,0.155)" stroke-width="1"><line x1="1330.1" x2="2505.0" y1="437.5" y2="437.5"/><line x1="1330.1" x2="2505.0" y1="465.5" y2="465.5"/><line x1="1330.1" x2="2505.0" y1="493.5" y2="493.5"/><line x1="1330.1" x2="2505.0" y1="521.5" y2="521.5"/><line x1="1330.1" x2="2505.0" y1="549.5" y2="549.5"/><line x1="1330.1" x2="2505.0" y1="577.5" y2="577.5"/><line x1="1330.1" x2="2505.0" y1="605.5" y2="605.5"/><line x1="1422.5" x2="1422.5" y1="437.0" y2="605.0"/><line x1="1520.5" x2="1520.5" y1="437.0" y2="605.0"/><line x1="1618.5" x2="1618.5" y1="437.0" y2="605.0"/><line x1="1716.5" x2="1716.5" y1="437.0" y2="605.0"/><line x1="1814.5" x2="1814.5" y1="437.0" y2="605.0"/><line x1="1911.5" x2="1911.5" y1="437.0" y2="605.0"/><line x1="2009.5" x2="2009.5" y1="437.0" y2="605.0"/><line x1="2107.5" x2="2107.5" y1="437.0" y2="605.0"/><line x1="2205.5" x2="2205.5" y1="437.0" y2="605.0"/><line x1="2303.5" x2="2303.5" y1="437.0" y2="605.0"/><line x1="2401.5" x2="2401.5" y1="437.0" y2="605.0"/><line x1="2499.5" x2="2499.5" y1="437.0" y2="605.0"/></g><clipPath id="clip1271_386"><rect x="1330.1" y="426" width="1174.9" height="180.0"/></clipPath><g clip-path="url(#clip1271_386)"><path d="M1330.0,585.2 L1334.5,575.3 L1344.4,575.0 L1354.1,575.0 L1363.9,575.3 L1373.8,576.4 L1383.4,575.3 L1393.3,575.4 L1403.1,576.0 L1412.8,575.7 L1422.7,597.7 L1432.5,576.1 L1442.2,576.4 L1452.0,576.4 L1461.9,576.4 L1471.5,577.9 L1481.4,577.2 L1491.2,576.0 L1500.9,576.0 L1510.8,575.3 L1520.4,597.4 L1530.3,578.6 L1540.1,578.3 L1549.8,578.2 L1559.7,578.2 L1569.5,579.1 L1579.2,579.1 L1589.0,577.5 L1598.9,577.6 L1608.6,577.6 L1618.4,596.3 L1628.2,577.6 L1637.9,577.5 L1647.7,577.2 L1657.6,577.2 L1667.3,578.9 L1677.1,578.6 L1687.0,574.5 L1696.6,573.5 L1706.5,565.7 L1716.3,583.8 L1726.0,561.8 L1735.9,561.3 L1745.7,560.3 L1755.4,559.8 L1765.2,561.8 L1775.1,563.2 L1784.8,563.2 L1794.6,569.4 L1804.4,569.4 L1814.3,591.9 L1824.0,571.0 L1833.8,571.7 L1843.6,572.0 L1853.3,572.0 L1863.2,573.9 L1873.0,573.5 L1882.7,572.3 L1892.5,572.8 L1902.4,572.8 L1912.1,594.1 L1921.2,567.3 L1931.0,567.6 L1940.7,567.9 L1950.5,567.9 L1960.4,569.5 L1970.2,570.9 L1980.0,567.9 L1989.7,567.8 L1999.6,567.6 L2009.6,594.1 L2019.2,564.7 L2029.1,564.0 L2038.9,562.8 L2048.8,562.5 L2058.6,563.2 L2068.3,564.4 L2078.1,559.6 L2088.0,558.4 L2097.8,549.6 L2107.6,571.7 L2117.5,543.0 L2127.3,543.1 L2137.0,540.2 L2146.9,539.7 L2156.7,539.9 L2166.5,542.7 L2176.4,536.1 L2186.1,543.8 L2195.9,541.6 L2205.6,562.9 L2215.4,514.0 L2225.2,484.3 L2234.9,480.7 L2244.8,480.5 L2254.6,477.3 L2264.4,474.1 L2274.3,458.2 L2284.1,456.0 L2293.8,447.9 L2303.6,489.8 L2313.5,489.0 L2323.3,492.7 L2333.1,492.0 L2343.0,497.1 L2352.6,505.9 L2362.5,520.6 L2372.3,522.8 L2382.1,533.8 L2392.0,538.5 L2401.7,570.5 L2411.5,541.9 L2421.3,542.2 L2431.2,542.6 L2441.0,543.8 L2450.7,546.3 L2460.5,554.1 L2470.4,558.5 L2480.2,562.0 L2490.0,562.1 L2500.0,594.0 L2500.0,605.0 L1330.0,605.0Z" fill="#E24D42" /><path d="M1330.0,604.8 L1334.5,604.8 L1344.4,604.8 L1354.1,604.8 L1363.9,604.8 L1373.8,604.8 L1383.4,604.8 L1393.3,604.8 L1403.1,604.8 L1412.8,604.8 L1422.7,604.8 L1432.5,604.8 L1442.2,604.8 L1452.0,604.8 L1461.9,604.8 L1471.5,604.8 L1481.4,604.8 L1491.2,604.8 L1500.9,604.8 L1510.8,604.8 L1520.4,604.8 L1530.3,604.8 L1540.1,604.8 L1549.8,604.8 L1559.7,604.8 L1569.5,604.8 L1579.2,604.8 L1589.0,604.8 L1598.9,604.8 L1608.6,604.8 L1618.4,604.8 L1628.2,604.8 L1637.9,604.8 L1647.7,604.8 L1657.6,604.8 L1667.3,604.8 L1677.1,604.8 L1687.0,604.8 L1696.6,604.8 L1706.5,604.8 L1716.3,604.8 L1726.0,604.8 L1735.9,604.8 L1745.7,604.8 L1755.4,604.8 L1765.2,604.8 L1775.1,604.8 L1784.8,604.8 L1794.6,604.8 L1804.4,604.8 L1814.3,604.8 L1824.0,604.8 L1833.8,604.8 L1843.6,604.8 L1853.3,604.8 L1863.2,604.8 L1873.0,604.8 L1882.7,604.8 L1892.5,604.8 L1902.4,604.8 L1912.1,604.0 L1921.2,596.0 L1931.0,596.1 L1940.7,596.3 L1950.5,596.3 L1960.4,596.3 L1970.2,596.3 L1980.0,596.6 L1989.7,596.7 L1999.6,596.3 L2009.6,604.0 L2019.2,593.0 L2029.1,592.6 L2038.9,591.4 L2048.8,590.8 L2058.6,590.4 L2068.3,589.9 L2078.1,586.7 L2088.0,585.7 L2097.8,578.3 L2107.6,582.0 L2117.5,575.3 L2127.3,576.1 L2137.0,576.4 L2146.9,576.9 L2156.7,577.2 L2166.5,580.1 L2176.4,578.2 L2186.1,585.2 L2195.9,583.8 L2205.6,583.7 L2215.4,560.2 L2225.2,528.7 L2234.9,524.7 L2244.8,524.0 L2254.6,523.5 L2264.4,526.2 L2274.3,522.8 L2284.1,530.4 L2293.8,534.2 L2303.6,550.0 L2313.5,574.2 L2323.3,578.3 L2333.1,578.6 L2343.0,579.3 L2352.6,580.0 L2362.5,583.7 L2372.3,584.2 L2382.1,588.6 L2392.0,595.5 L2401.7,604.3 L2411.5,599.1 L2421.3,598.4 L2431.2,598.4 L2441.0,598.1 L2450.7,598.1 L2460.5,598.1 L2470.4,598.4 L2480.2,598.1 L2490.0,598.1 L2500.0,603.5 L2500.0,605.0 L1330.0,605.0Z" fill="#EF843C" /><path d="M1330,604.55 L2030,604.55 L2412,604.5 L2421,603.2 L2500,603.2 L2500,605 L1330,605Z" fill="#8cc57d"/></g><g fill="rgb(204,204,220)" stroke="rgb(204,204,220)" stroke-width="0.25" font-size="12px" class="tk"><text x="1324.3" y="440.8" text-anchor="end" textLength="43.2" lengthAdjust="spacing">300 rds</text><text x="1324.3" y="468.8" text-anchor="end" textLength="42.8" lengthAdjust="spacing">250 rds</text><text x="1324.3" y="496.8" text-anchor="end" textLength="43.0" lengthAdjust="spacing">200 rds</text><text x="1324.3" y="524.8" text-anchor="end" textLength="41.5" lengthAdjust="spacing">150 rds</text><text x="1324.3" y="552.8" text-anchor="end" textLength="41.5" lengthAdjust="spacing">100 rds</text><text x="1324.3" y="580.8" text-anchor="end" textLength="35.5" lengthAdjust="spacing">50 rds</text><text x="1324.3" y="608.8" text-anchor="end" textLength="29" lengthAdjust="spacing">0 rds</text><text x="1422.5" y="624.0" text-anchor="middle" textLength="30.8" lengthAdjust="spacing">15:50</text><text x="1520.4" y="624.0" text-anchor="middle" textLength="30.8" lengthAdjust="spacing">15:55</text><text x="1618.3" y="624.0" text-anchor="middle" textLength="30.8" lengthAdjust="spacing">16:00</text><text x="1716.1" y="624.0" text-anchor="middle" textLength="30.8" lengthAdjust="spacing">16:05</text><text x="1814.0" y="624.0" text-anchor="middle" textLength="30.8" lengthAdjust="spacing">16:10</text><text x="1911.9" y="624.0" text-anchor="middle" textLength="30.8" lengthAdjust="spacing">16:15</text><text x="2009.8" y="624.0" text-anchor="middle" textLength="30.8" lengthAdjust="spacing">16:20</text><text x="2107.7" y="624.0" text-anchor="middle" textLength="30.8" lengthAdjust="spacing">16:25</text><text x="2205.5" y="624.0" text-anchor="middle" textLength="30.8" lengthAdjust="spacing">16:30</text><text x="2303.4" y="624.0" text-anchor="middle" textLength="30.8" lengthAdjust="spacing">16:35</text><text x="2401.3" y="624.0" text-anchor="middle" textLength="30.8" lengthAdjust="spacing">16:40</text><text x="2499.2" y="624.0" text-anchor="middle" textLength="30.8" lengthAdjust="spacing">16:45</text></g>
<g stroke="rgba(240,250,255,0.155)" stroke-width="1"><line x1="77.0" x2="1237.0" y1="741.5" y2="741.5"/><line x1="77.0" x2="1237.0" y1="774.5" y2="774.5"/><line x1="77.0" x2="1237.0" y1="808.5" y2="808.5"/><line x1="77.0" x2="1237.0" y1="841.5" y2="841.5"/><line x1="77.0" x2="1237.0" y1="875.5" y2="875.5"/><line x1="77.0" x2="1237.0" y1="909.5" y2="909.5"/><line x1="168.5" x2="168.5" y1="741.0" y2="909.0"/><line x1="264.5" x2="264.5" y1="741.0" y2="909.0"/><line x1="361.5" x2="361.5" y1="741.0" y2="909.0"/><line x1="458.5" x2="458.5" y1="741.0" y2="909.0"/><line x1="554.5" x2="554.5" y1="741.0" y2="909.0"/><line x1="651.5" x2="651.5" y1="741.0" y2="909.0"/><line x1="748.5" x2="748.5" y1="741.0" y2="909.0"/><line x1="844.5" x2="844.5" y1="741.0" y2="909.0"/><line x1="941.5" x2="941.5" y1="741.0" y2="909.0"/><line x1="1038.5" x2="1038.5" y1="741.0" y2="909.0"/><line x1="1134.5" x2="1134.5" y1="741.0" y2="909.0"/><line x1="1231.5" x2="1231.5" y1="741.0" y2="909.0"/></g><clipPath id="clip3_690"><rect x="77.0" y="730" width="1160.0" height="180.0"/></clipPath><g clip-path="url(#clip3_690)"><rect x="77" y="764.0" width="1155" height="3.099999999999909" fill="#E24D42"/><rect x="77" y="766.8" width="1155" height="2.1000000000000227" fill="#EF843C"/><rect x="77" y="768.6" width="1155" height="2.2999999999999545" fill="#6ED0E0"/><rect x="77" y="770.6" width="1155" height="2.699999999999932" fill="#EAB839"/><rect x="77" y="773.0" width="1155" height="1.6999999999999318" fill="#7EB26D"/><rect x="77" y="774.4" width="1155" height="16.899999999999977" fill="#1F78C1"/><rect x="77" y="791.0" width="1155" height="25.0" fill="#BA43A9"/><rect x="77" y="815.7" width="1155" height="21.399999999999864" fill="#705DA0"/><rect x="77" y="836.8" width="1155" height="17.799999999999955" fill="#508642"/><rect x="77" y="854.3" width="1155" height="18.799999999999955" fill="#CCA300"/></g><g fill="rgb(204,204,220)" stroke="rgb(204,204,220)" stroke-width="0.25" font-size="12px" class="tk"><text x="71.2" y="744.8" text-anchor="end" textLength="52.8" lengthAdjust="spacing">2.50 kB/s</text><text x="71.2" y="777.8" text-anchor="end" textLength="29.4" lengthAdjust="spacing">0 B/s</text><text x="71.2" y="811.8" text-anchor="end" textLength="57.5" lengthAdjust="spacing">-2.50 kB/s</text><text x="71.2" y="844.8" text-anchor="end" textLength="40.6" lengthAdjust="spacing">-5 kB/s</text><text x="71.2" y="878.8" text-anchor="end" textLength="56.5" lengthAdjust="spacing">-7.50 kB/s</text><text x="71.2" y="912.8" text-anchor="end" textLength="45.8" lengthAdjust="spacing">-10 kB/s</text><text x="168.2" y="928.0" text-anchor="middle" textLength="30.8" lengthAdjust="spacing">15:50</text><text x="264.9" y="928.0" text-anchor="middle" textLength="30.8" lengthAdjust="spacing">15:55</text><text x="361.5" y="928.0" text-anchor="middle" textLength="30.8" lengthAdjust="spacing">16:00</text><text x="458.2" y="928.0" text-anchor="middle" textLength="30.8" lengthAdjust="spacing">16:05</text><text x="554.8" y="928.0" text-anchor="middle" textLength="30.8" lengthAdjust="spacing">16:10</text><text x="651.5" y="928.0" text-anchor="middle" textLength="30.8" lengthAdjust="spacing">16:15</text><text x="748.1" y="928.0" text-anchor="middle" textLength="30.8" lengthAdjust="spacing">16:20</text><text x="844.8" y="928.0" text-anchor="middle" textLength="30.8" lengthAdjust="spacing">16:25</text><text x="941.4" y="928.0" text-anchor="middle" textLength="30.8" lengthAdjust="spacing">16:30</text><text x="1038.0" y="928.0" text-anchor="middle" textLength="30.8" lengthAdjust="spacing">16:35</text><text x="1134.7" y="928.0" text-anchor="middle" textLength="30.8" lengthAdjust="spacing">16:40</text><text x="1231.4" y="928.0" text-anchor="middle" textLength="30.8" lengthAdjust="spacing">16:45</text></g>
<g stroke="rgba(240,250,255,0.155)" stroke-width="1"><line x1="1346.2" x2="2505.0" y1="741.5" y2="741.5"/><line x1="1346.2" x2="2505.0" y1="783.5" y2="783.5"/><line x1="1346.2" x2="2505.0" y1="825.5" y2="825.5"/><line x1="1346.2" x2="2505.0" y1="867.5" y2="867.5"/><line x1="1346.2" x2="2505.0" y1="909.5" y2="909.5"/><line x1="1437.5" x2="1437.5" y1="741.0" y2="909.0"/><line x1="1534.5" x2="1534.5" y1="741.0" y2="909.0"/><line x1="1630.5" x2="1630.5" y1="741.0" y2="909.0"/><line x1="1727.5" x2="1727.5" y1="741.0" y2="909.0"/><line x1="1823.5" x2="1823.5" y1="741.0" y2="909.0"/><line x1="1920.5" x2="1920.5" y1="741.0" y2="909.0"/><line x1="2016.5" x2="2016.5" y1="741.0" y2="909.0"/><line x1="2113.5" x2="2113.5" y1="741.0" y2="909.0"/><line x1="2209.5" x2="2209.5" y1="741.0" y2="909.0"/><line x1="2306.5" x2="2306.5" y1="741.0" y2="909.0"/><line x1="2403.5" x2="2403.5" y1="741.0" y2="909.0"/><line x1="2499.5" x2="2499.5" y1="741.0" y2="909.0"/></g><clipPath id="clip1271_690"><rect x="1346.2" y="730" width="1158.8" height="180.0"/></clipPath><g clip-path="url(#clip1271_690)"></g><g fill="rgb(204,204,220)" stroke="rgb(204,204,220)" stroke-width="0.25" font-size="12px" class="tk"><text x="1340.4" y="744.8" text-anchor="end" textLength="28.2" lengthAdjust="spacing">1 B/s</text><text x="1340.4" y="786.8" text-anchor="end" textLength="54" lengthAdjust="spacing">500 mB/s</text><text x="1340.4" y="828.8" text-anchor="end" textLength="29.4" lengthAdjust="spacing">0 B/s</text><text x="1340.4" y="870.8" text-anchor="end" textLength="59.2" lengthAdjust="spacing">-500 mB/s</text><text x="1340.4" y="912.8" text-anchor="end" textLength="32.8" lengthAdjust="spacing">-1 B/s</text><text x="1437.5" y="928.0" text-anchor="middle" textLength="30.8" lengthAdjust="spacing">15:50</text><text x="1534.0" y="928.0" text-anchor="middle" textLength="30.8" lengthAdjust="spacing">15:55</text><text x="1630.6" y="928.0" text-anchor="middle" textLength="30.8" lengthAdjust="spacing">16:00</text><text x="1727.2" y="928.0" text-anchor="middle" textLength="30.8" lengthAdjust="spacing">16:05</text><text x="1823.7" y="928.0" text-anchor="middle" textLength="30.8" lengthAdjust="spacing">16:10</text><text x="1920.2" y="928.0" text-anchor="middle" textLength="30.8" lengthAdjust="spacing">16:15</text><text x="2016.8" y="928.0" text-anchor="middle" textLength="30.8" lengthAdjust="spacing">16:20</text><text x="2113.3" y="928.0" text-anchor="middle" textLength="30.8" lengthAdjust="spacing">16:25</text><text x="2209.9" y="928.0" text-anchor="middle" textLength="30.8" lengthAdjust="spacing">16:30</text><text x="2306.4" y="928.0" text-anchor="middle" textLength="30.8" lengthAdjust="spacing">16:35</text><text x="2403.0" y="928.0" text-anchor="middle" textLength="30.8" lengthAdjust="spacing">16:40</text><text x="2499.6" y="928.0" text-anchor="middle" textLength="30.8" lengthAdjust="spacing">16:45</text></g><text x="1900.8" y="808" text-anchor="middle" fill="rgb(204,204,220)" font-size="14px" stroke="rgb(204,204,220)" stroke-width="0.35" class="nd" textLength="53.3" lengthAdjust="spacing">No data</text>
<g stroke="rgba(240,250,255,0.155)" stroke-width="1"><line x1="52.9" x2="1237.0" y1="1045.5" y2="1045.5"/><line x1="52.9" x2="1237.0" y1="1078.5" y2="1078.5"/><line x1="52.9" x2="1237.0" y1="1112.5" y2="1112.5"/><line x1="52.9" x2="1237.0" y1="1145.5" y2="1145.5"/><line x1="52.9" x2="1237.0" y1="1179.5" y2="1179.5"/><line x1="52.9" x2="1237.0" y1="1213.5" y2="1213.5"/><line x1="146.5" x2="146.5" y1="1045.0" y2="1213.0"/><line x1="244.5" x2="244.5" y1="1045.0" y2="1213.0"/><line x1="343.5" x2="343.5" y1="1045.0" y2="1213.0"/><line x1="442.5" x2="442.5" y1="1045.0" y2="1213.0"/><line x1="540.5" x2="540.5" y1="1045.0" y2="1213.0"/><line x1="639.5" x2="639.5" y1="1045.0" y2="1213.0"/><line x1="738.5" x2="738.5" y1="1045.0" y2="1213.0"/><line x1="836.5" x2="836.5" y1="1045.0" y2="1213.0"/><line x1="935.5" x2="935.5" y1="1045.0" y2="1213.0"/><line x1="1033.5" x2="1033.5" y1="1045.0" y2="1213.0"/><line x1="1132.5" x2="1132.5" y1="1045.0" y2="1213.0"/><line x1="1231.5" x2="1231.5" y1="1045.0" y2="1213.0"/></g><clipPath id="clip3_994"><rect x="52.9" y="1034" width="1184.1" height="180.0"/></clipPath><g clip-path="url(#clip3_994)"><path d="M53.0,1143.3 L57.2,1142.4 L86.5,1141.5 L106.1,1142.1 L128.0,1142.5 L136.6,1141.9 L145.7,1145.8 L155.5,1143.0 L185.4,1142.4 L203.7,1143.0 L224.5,1143.3 L234.9,1143.0 L245.2,1147.6 L255.0,1146.0 L264.8,1146.2 L294.1,1148.2 L313.6,1147.6 L333.2,1147.6 L343.3,1150.9 L355.0,1147.0 L363.4,1145.4 L383.0,1144.3 L392.7,1144.6 L403.7,1144.0 L422.0,1140.3 L432.4,1132.4 L442.2,1135.0 L451.3,1132.4 L461.1,1131.7 L480.6,1129.9 L491.6,1130.5 L511.8,1130.5 L520.9,1136.9 L530.7,1138.1 L540.5,1142.5 L550.2,1139.3 L580.8,1139.1 L590.5,1141.5 L606.4,1142.7 L629.6,1143.1 L639.4,1147.0 L649.1,1144.6 L660.0,1145.4 L669.0,1146.8 L679.2,1146.5 L689.4,1147.1 L699.6,1147.4 L728.7,1146.9 L738.5,1151.0 L748.1,1145.6 L758.3,1143.3 L767.9,1140.4 L787.7,1135.7 L797.9,1132.7 L807.4,1129.3 L817.0,1126.4 L826.9,1119.7 L836.8,1121.6 L846.3,1116.3 L856.5,1117.8 L866.5,1115.3 L876.3,1115.9 L885.9,1116.9 L896.1,1117.4 L905.6,1114.6 L915.8,1116.9 L925.4,1114.9 L935.6,1116.3 L945.2,1101.2 L955.4,1088.5 L965.1,1083.4 L975.0,1081.2 L984.8,1077.2 L994.7,1072.9 L1004.6,1063.3 L1014.4,1057.2 L1024.4,1049.6 L1034.2,1063.3 L1044.2,1070.0 L1054.0,1074.2 L1063.8,1075.3 L1073.8,1080.8 L1083.6,1088.1 L1093.5,1098.0 L1103.3,1103.5 L1113.2,1111.8 L1123.1,1111.0 L1132.9,1119.3 L1142.9,1115.3 L1152.7,1115.0 L1162.5,1116.1 L1172.5,1118.1 L1182.3,1120.0 L1192.2,1125.1 L1202.1,1129.5 L1211.9,1134.0 L1221.8,1134.6 L1232.0,1142.0 L1232.0,1213.0 L53.0,1213.0Z" fill="#CCA300" /><path d="M53.0,1154.9 L86.5,1154.1 L136.6,1153.7 L145.7,1156.2 L155.5,1155.2 L185.4,1154.1 L234.9,1155.2 L245.2,1157.1 L264.8,1156.8 L294.1,1158.6 L333.2,1158.4 L343.3,1160.1 L355.0,1157.4 L363.4,1156.2 L383.0,1155.3 L403.7,1154.9 L423.3,1153.1 L432.4,1149.2 L442.2,1150.9 L451.3,1150.3 L480.6,1149.2 L491.6,1149.7 L511.8,1149.5 L520.9,1152.9 L530.7,1153.5 L540.5,1155.8 L550.2,1154.0 L580.8,1152.5 L590.5,1154.0 L629.6,1155.2 L639.4,1156.8 L649.1,1155.6 L660.0,1156.2 L669.0,1157.1 L689.4,1157.3 L728.7,1157.3 L738.5,1160.3 L748.1,1156.3 L758.3,1154.2 L767.9,1151.6 L787.7,1146.5 L797.9,1143.6 L807.4,1140.8 L817.0,1138.2 L826.9,1133.5 L836.8,1134.4 L846.3,1131.2 L856.5,1133.1 L866.5,1132.9 L876.3,1134.0 L885.9,1135.4 L896.1,1136.6 L905.6,1135.0 L915.8,1137.2 L925.4,1135.7 L935.6,1136.3 L945.2,1122.3 L955.4,1108.9 L965.1,1104.2 L975.0,1101.6 L984.8,1099.1 L994.7,1097.4 L1004.6,1092.6 L1014.4,1090.8 L1024.4,1087.8 L1034.2,1099.6 L1044.2,1108.2 L1054.0,1112.7 L1063.8,1114.2 L1073.8,1117.4 L1083.6,1121.0 L1093.5,1127.4 L1103.3,1131.2 L1113.2,1135.7 L1123.1,1136.9 L1132.9,1142.7 L1142.9,1140.8 L1152.7,1140.4 L1162.5,1140.8 L1172.5,1141.7 L1182.3,1142.3 L1192.2,1145.2 L1202.1,1147.1 L1211.9,1149.1 L1221.8,1149.4 L1232.0,1154.2 L1232.0,1213.0 L53.0,1213.0Z" fill="#508642" /><path d="M53.0,1161.1 L86.5,1160.1 L136.6,1160.1 L145.7,1161.9 L155.5,1161.1 L185.4,1160.1 L234.9,1160.7 L245.2,1162.6 L264.8,1162.3 L294.1,1164.1 L333.2,1163.7 L343.3,1165.6 L355.0,1162.9 L363.4,1162.0 L383.0,1161.1 L403.7,1160.7 L423.3,1159.0 L432.4,1154.9 L442.2,1156.8 L451.3,1155.9 L480.6,1154.9 L491.6,1155.3 L511.8,1155.2 L520.9,1158.6 L530.7,1159.2 L540.5,1161.3 L550.2,1159.8 L580.8,1158.9 L590.5,1159.8 L629.6,1161.4 L639.4,1163.1 L649.1,1162.3 L660.0,1162.9 L669.0,1163.7 L689.4,1164.1 L728.7,1164.1 L738.5,1166.3 L748.1,1163.3 L758.3,1161.4 L767.9,1159.5 L787.7,1155.4 L797.9,1153.5 L807.4,1151.2 L817.0,1149.1 L826.9,1145.2 L836.8,1145.6 L846.3,1143.1 L856.5,1144.2 L866.5,1143.3 L876.3,1144.3 L885.9,1145.9 L896.1,1146.8 L905.6,1145.2 L915.8,1146.5 L925.4,1145.5 L935.6,1145.9 L945.2,1138.2 L955.4,1130.6 L965.1,1127.4 L975.0,1125.8 L984.8,1123.2 L994.7,1121.2 L1004.6,1116.8 L1014.4,1114.0 L1024.4,1110.5 L1034.2,1117.2 L1044.2,1120.6 L1054.0,1123.2 L1063.8,1124.4 L1073.8,1127.6 L1083.6,1130.9 L1093.5,1136.7 L1103.3,1140.1 L1113.2,1144.0 L1123.1,1144.2 L1132.9,1149.1 L1142.9,1147.1 L1152.7,1146.5 L1162.5,1146.9 L1172.5,1147.8 L1182.3,1148.4 L1192.2,1151.2 L1202.1,1153.3 L1211.9,1155.4 L1221.8,1156.1 L1232.0,1159.9 L1232.0,1213.0 L53.0,1213.0Z" fill="#705DA0" /><path d="M53.0,1170.6 L86.5,1170.0 L136.6,1170.2 L145.7,1172.9 L155.5,1170.8 L185.4,1170.2 L234.9,1171.2 L245.2,1173.9 L255.0,1172.6 L294.1,1174.2 L333.2,1173.6 L343.3,1175.9 L355.0,1173.3 L363.4,1172.3 L383.0,1171.7 L403.7,1171.8 L423.3,1170.0 L432.4,1165.6 L442.2,1167.2 L451.3,1165.9 L480.6,1164.7 L491.6,1165.3 L511.8,1164.7 L520.9,1168.7 L530.7,1169.0 L540.5,1171.4 L550.2,1169.8 L580.8,1169.2 L590.5,1170.2 L629.6,1172.0 L639.4,1174.1 L649.1,1172.6 L660.0,1173.3 L669.0,1173.3 L689.4,1173.7 L728.7,1173.5 L738.5,1175.8 L748.1,1172.7 L758.3,1171.1 L767.9,1169.5 L787.7,1166.5 L797.9,1164.4 L807.4,1162.4 L817.0,1160.8 L826.9,1157.3 L836.8,1158.6 L846.3,1156.1 L856.5,1157.0 L866.5,1155.7 L876.3,1156.3 L885.9,1157.3 L896.1,1158.0 L905.6,1156.3 L915.8,1157.7 L925.4,1156.3 L935.6,1157.6 L945.2,1149.9 L955.4,1143.1 L965.1,1139.9 L975.0,1139.1 L984.8,1136.6 L994.7,1134.4 L1004.6,1129.9 L1014.4,1126.7 L1024.4,1122.5 L1034.2,1129.3 L1044.2,1133.4 L1054.0,1135.7 L1063.8,1136.9 L1073.8,1140.1 L1083.6,1144.0 L1093.5,1149.7 L1103.3,1152.5 L1113.2,1156.1 L1123.1,1155.4 L1132.9,1159.9 L1142.9,1157.7 L1152.7,1157.0 L1162.5,1157.3 L1172.5,1158.4 L1182.3,1159.0 L1192.2,1162.1 L1202.1,1164.4 L1211.9,1166.7 L1221.8,1167.2 L1232.0,1170.4 L1232.0,1213.0 L53.0,1213.0Z" fill="#BA43A9" /><path d="M53.0,1172.0 L86.5,1171.7 L136.6,1171.8 L145.7,1174.5 L155.5,1172.6 L185.4,1172.0 L234.9,1172.9 L245.2,1175.5 L255.0,1174.2 L294.1,1175.9 L333.2,1175.3 L343.3,1177.5 L355.0,1174.7 L363.4,1173.6 L383.0,1173.0 L403.7,1173.0 L423.3,1171.4 L432.4,1166.9 L442.2,1168.6 L451.3,1167.4 L480.6,1166.2 L491.6,1166.5 L511.8,1166.2 L520.9,1170.2 L530.7,1170.5 L540.5,1172.9 L550.2,1171.2 L580.8,1170.6 L590.5,1171.7 L629.6,1173.3 L639.4,1175.3 L649.1,1174.1 L660.0,1174.5 L669.0,1174.8 L689.4,1175.2 L728.7,1174.9 L738.5,1177.4 L748.1,1174.3 L758.3,1172.7 L767.9,1171.1 L787.7,1168.4 L797.9,1166.5 L807.4,1164.7 L817.0,1163.1 L826.9,1159.9 L836.8,1161.2 L846.3,1158.4 L856.5,1159.3 L866.5,1158.0 L876.3,1158.6 L885.9,1159.6 L896.1,1160.2 L905.6,1158.4 L915.8,1159.9 L925.4,1158.4 L935.6,1159.5 L945.2,1151.9 L955.4,1145.0 L965.1,1142.0 L975.0,1140.8 L984.8,1138.2 L994.7,1136.0 L1004.6,1131.6 L1014.4,1128.6 L1024.4,1124.6 L1034.2,1131.2 L1044.2,1135.0 L1054.0,1137.3 L1063.8,1138.6 L1073.8,1141.8 L1083.6,1145.6 L1093.5,1151.4 L1103.3,1154.2 L1113.2,1157.6 L1123.1,1157.0 L1132.9,1161.4 L1142.9,1159.3 L1152.7,1158.6 L1162.5,1159.0 L1172.5,1159.9 L1182.3,1160.5 L1192.2,1163.7 L1202.1,1165.9 L1211.9,1168.2 L1221.8,1168.8 L1232.0,1171.8 L1232.0,1213.0 L53.0,1213.0Z" fill="#1F78C1" /><path d="M53.0,1179.1 L86.5,1177.5 L136.6,1177.9 L145.7,1180.0 L155.5,1178.8 L185.4,1178.1 L234.9,1178.5 L245.2,1181.0 L255.0,1180.0 L294.1,1181.0 L333.2,1180.8 L343.3,1182.4 L355.0,1180.0 L363.4,1179.7 L383.0,1179.0 L403.7,1179.0 L423.3,1176.9 L432.4,1173.0 L442.2,1174.7 L451.3,1173.3 L480.6,1172.0 L491.6,1172.6 L511.8,1172.0 L520.9,1175.7 L530.7,1176.1 L540.5,1178.1 L550.2,1176.7 L580.8,1176.3 L590.5,1177.8 L629.6,1178.8 L639.4,1180.6 L649.1,1179.4 L660.0,1180.2 L669.0,1180.3 L689.4,1180.6 L728.7,1180.7 L738.5,1182.6 L748.1,1179.9 L758.3,1178.6 L767.9,1177.1 L787.7,1174.3 L797.9,1172.9 L807.4,1171.4 L817.0,1170.1 L826.9,1166.7 L836.8,1167.9 L846.3,1165.3 L856.5,1166.0 L866.5,1164.6 L876.3,1165.0 L885.9,1165.4 L896.1,1165.9 L905.6,1164.4 L915.8,1165.6 L925.4,1164.6 L935.6,1165.3 L945.2,1158.4 L955.4,1151.4 L965.1,1148.8 L975.0,1147.8 L984.8,1145.2 L994.7,1143.3 L1004.6,1138.9 L1014.4,1136.0 L1024.4,1131.8 L1034.2,1138.9 L1044.2,1142.3 L1054.0,1144.2 L1063.8,1145.0 L1073.8,1148.0 L1083.6,1151.6 L1093.5,1156.5 L1103.3,1159.3 L1113.2,1163.1 L1123.1,1162.4 L1132.9,1166.9 L1142.9,1165.0 L1152.7,1164.7 L1162.5,1165.3 L1172.5,1166.3 L1182.3,1167.2 L1192.2,1170.1 L1202.1,1172.0 L1211.9,1173.9 L1221.8,1174.2 L1232.0,1178.0 L1232.0,1213.0 L53.0,1213.0Z" fill="#E24D42" /><path d="M767.0,1188.0 L777.4,1186.9 L787.7,1185.0 L807.4,1182.2 L817.0,1181.3 L826.9,1179.9 L836.8,1179.7 L846.3,1179.0 L856.5,1180.3 L866.5,1181.2 L885.9,1182.9 L896.1,1183.9 L905.6,1184.1 L915.8,1184.5 L935.6,1184.1 L945.2,1178.4 L955.4,1171.1 L965.1,1168.2 L975.0,1167.2 L984.8,1166.5 L994.7,1166.9 L1004.6,1167.2 L1014.4,1168.2 L1024.4,1169.1 L1034.2,1173.9 L1044.2,1179.0 L1054.0,1181.6 L1063.8,1182.5 L1073.8,1183.2 L1083.6,1183.9 L1093.5,1185.0 L1103.3,1185.8 L1113.2,1186.7 L1123.9,1188.0 L1232.0,1188.0 L1232.0,1213.0 L767.0,1213.0Z" fill="#EF843C" /></g><g fill="rgb(204,204,220)" stroke="rgb(204,204,220)" stroke-width="0.25" font-size="12px" class="tk"><text x="47.1" y="1048.8" text-anchor="end" textLength="32.8" lengthAdjust="spacing">12.5%</text><text x="47.1" y="1081.8" text-anchor="end">10%</text><text x="47.1" y="1115.8" text-anchor="end" textLength="32.8" lengthAdjust="spacing">7.50%</text><text x="47.1" y="1148.8" text-anchor="end">5%</text><text x="47.1" y="1182.8" text-anchor="end" textLength="33.6" lengthAdjust="spacing">2.50%</text><text x="47.1" y="1216.8" text-anchor="end">0%</text><text x="146.3" y="1232.0" text-anchor="middle" textLength="30.8" lengthAdjust="spacing">15:50</text><text x="244.9" y="1232.0" text-anchor="middle" textLength="30.8" lengthAdjust="spacing">15:55</text><text x="343.6" y="1232.0" text-anchor="middle" textLength="30.8" lengthAdjust="spacing">16:00</text><text x="442.2" y="1232.0" text-anchor="middle" textLength="30.8" lengthAdjust="spacing">16:05</text><text x="540.8" y="1232.0" text-anchor="middle" textLength="30.8" lengthAdjust="spacing">16:10</text><text x="639.5" y="1232.0" text-anchor="middle" textLength="30.8" lengthAdjust="spacing">16:15</text><text x="738.1" y="1232.0" text-anchor="middle" textLength="30.8" lengthAdjust="spacing">16:20</text><text x="836.7" y="1232.0" text-anchor="middle" textLength="30.8" lengthAdjust="spacing">16:25</text><text x="935.3" y="1232.0" text-anchor="middle" textLength="30.8" lengthAdjust="spacing">16:30</text><text x="1034.0" y="1232.0" text-anchor="middle" textLength="30.8" lengthAdjust="spacing">16:35</text><text x="1132.6" y="1232.0" text-anchor="middle" textLength="30.8" lengthAdjust="spacing">16:40</text><text x="1231.2" y="1232.0" text-anchor="middle" textLength="30.8" lengthAdjust="spacing">16:45</text></g>
<g stroke="rgba(240,250,255,0.155)" stroke-width="1"><line x1="1319.2" x2="2505.0" y1="1045.5" y2="1045.5"/><line x1="1319.2" x2="2505.0" y1="1073.5" y2="1073.5"/><line x1="1319.2" x2="2505.0" y1="1101.5" y2="1101.5"/><line x1="1319.2" x2="2505.0" y1="1129.5" y2="1129.5"/><line x1="1319.2" x2="2505.0" y1="1157.5" y2="1157.5"/><line x1="1319.2" x2="2505.0" y1="1185.5" y2="1185.5"/><line x1="1319.2" x2="2505.0" y1="1213.5" y2="1213.5"/><line x1="1412.5" x2="1412.5" y1="1045.0" y2="1213.0"/><line x1="1511.5" x2="1511.5" y1="1045.0" y2="1213.0"/><line x1="1610.5" x2="1610.5" y1="1045.0" y2="1213.0"/><line x1="1708.5" x2="1708.5" y1="1045.0" y2="1213.0"/><line x1="1807.5" x2="1807.5" y1="1045.0" y2="1213.0"/><line x1="1906.5" x2="1906.5" y1="1045.0" y2="1213.0"/><line x1="2005.5" x2="2005.5" y1="1045.0" y2="1213.0"/><line x1="2104.5" x2="2104.5" y1="1045.0" y2="1213.0"/><line x1="2203.5" x2="2203.5" y1="1045.0" y2="1213.0"/><line x1="2301.5" x2="2301.5" y1="1045.0" y2="1213.0"/><line x1="2400.5" x2="2400.5" y1="1045.0" y2="1213.0"/><line x1="2499.5" x2="2499.5" y1="1045.0" y2="1213.0"/></g><clipPath id="clip1271_994"><rect x="1319.2" y="1034" width="1185.8" height="180.0"/></clipPath><g clip-path="url(#clip1271_994)"><path d="M2202.0,1193.0 L2203.8,1186.9 L2212.3,1149.0 L2222.3,1128.9 L2232.1,1127.1 L2242.0,1126.3 L2252.0,1121.6 L2261.9,1117.4 L2271.9,1103.4 L2281.7,1092.7 L2291.6,1064.9 L2301.6,1107.6 L2311.5,1128.4 L2321.5,1129.9 L2331.3,1130.1 L2341.2,1136.0 L2351.2,1141.4 L2361.1,1153.5 L2371.1,1162.8 L2380.0,1186.9 L2381.0,1189.8 L2381.0,1213.0 L2202.0,1213.0Z" fill="#CCA300" /><path d="M2208.0,1193.0 L2209.1,1186.9 L2212.3,1156.7 L2222.3,1136.3 L2232.1,1134.4 L2242.0,1133.7 L2252.0,1131.2 L2261.9,1129.0 L2271.9,1121.6 L2281.7,1116.5 L2291.6,1102.5 L2301.6,1144.6 L2311.5,1166.2 L2321.5,1167.1 L2331.3,1167.8 L2341.2,1170.9 L2351.2,1173.6 L2361.1,1180.9 L2371.1,1185.4 L2372.3,1186.9 L2374.0,1189.8 L2374.0,1213.0 L2208.0,1213.0Z" fill="#508642" /><path d="M2209.0,1193.0 L2210.1,1186.9 L2212.3,1179.0 L2222.3,1168.5 L2232.1,1167.8 L2242.0,1167.2 L2252.0,1164.7 L2261.9,1162.7 L2271.9,1155.4 L2281.7,1149.4 L2291.6,1135.4 L2301.6,1157.3 L2311.5,1168.5 L2321.5,1169.4 L2331.3,1169.8 L2341.2,1172.6 L2351.2,1175.2 L2361.1,1181.8 L2371.1,1186.0 L2372.0,1189.8 L2372.0,1213.0 L2209.0,1213.0Z" fill="#705DA0" /><path d="M2210.0,1193.0 L2211.0,1186.9 L2212.3,1180.0 L2222.3,1169.5 L2232.1,1168.8 L2242.0,1168.3 L2252.0,1165.7 L2261.9,1163.7 L2271.9,1156.4 L2281.7,1150.4 L2291.6,1136.6 L2301.6,1158.3 L2311.5,1169.5 L2321.5,1170.4 L2331.3,1170.8 L2341.2,1173.6 L2351.2,1176.2 L2361.1,1182.8 L2371.1,1186.9 L2372.0,1189.8 L2372.0,1213.0 L2210.0,1213.0Z" fill="#E24D42" /><path d="M2209.0,1193.0 L2213.6,1186.9 L2222.3,1176.2 L2232.1,1174.9 L2242.0,1174.8 L2252.0,1174.8 L2261.9,1174.9 L2271.9,1175.2 L2281.7,1175.5 L2291.6,1176.0 L2296.5,1186.9 L2299.0,1193.0 L2299.0,1213.0 L2209.0,1213.0Z" fill="#EF843C" /></g><g fill="rgb(204,204,220)" stroke="rgb(204,204,220)" stroke-width="0.25" font-size="12px" class="tk"><text x="1313.4" y="1048.8" text-anchor="end" textLength="31.6" lengthAdjust="spacing">600%</text><text x="1313.4" y="1076.8" text-anchor="end" textLength="31.6" lengthAdjust="spacing">500%</text><text x="1313.4" y="1104.8" text-anchor="end" textLength="31.6" lengthAdjust="spacing">400%</text><text x="1313.4" y="1132.8" text-anchor="end" textLength="31.6" lengthAdjust="spacing">300%</text><text x="1313.4" y="1160.8" text-anchor="end" textLength="31.6" lengthAdjust="spacing">200%</text><text x="1313.4" y="1188.8" text-anchor="end">100%</text><text x="1313.4" y="1216.8" text-anchor="end">0%</text><text x="1412.3" y="1232.0" text-anchor="middle" textLength="30.8" lengthAdjust="spacing">15:50</text><text x="1511.1" y="1232.0" text-anchor="middle" textLength="30.8" lengthAdjust="spacing">15:55</text><text x="1610.0" y="1232.0" text-anchor="middle" textLength="30.8" lengthAdjust="spacing">16:00</text><text x="1708.8" y="1232.0" text-anchor="middle" textLength="30.8" lengthAdjust="spacing">16:05</text><text x="1807.7" y="1232.0" text-anchor="middle" textLength="30.8" lengthAdjust="spacing">16:10</text><text x="1906.5" y="1232.0" text-anchor="middle" textLength="30.8" lengthAdjust="spacing">16:15</text><text x="2005.4" y="1232.0" text-anchor="middle" textLength="30.8" lengthAdjust="spacing">16:20</text><text x="2104.2" y="1232.0" text-anchor="middle" textLength="30.8" lengthAdjust="spacing">16:25</text><text x="2203.1" y="1232.0" text-anchor="middle" textLength="30.8" lengthAdjust="spacing">16:30</text><text x="2301.9" y="1232.0" text-anchor="middle" textLength="30.8" lengthAdjust="spacing">16:35</text><text x="2400.8" y="1232.0" text-anchor="middle" textLength="30.8" lengthAdjust="spacing">16:40</text><text x="2499.6" y="1232.0" text-anchor="middle" textLength="30.8" lengthAdjust="spacing">16:45</text></g>
</svg>
<div style="position:absolute;left:0;top:1187px;width:2539px;height:5px;background:linear-gradient(90deg,#223a45 0,#223a46 1100px,#1d2d47 2000px,#1b2946 2539px)"></div>
<div style="position:absolute;left:35px;top:1187px;width:288px;height:5px;background:#f1f1f1"></div>
<div style="position:absolute;left:424px;top:1187px;width:48px;height:5px;background:#52676f"></div>
</div></body></html>
